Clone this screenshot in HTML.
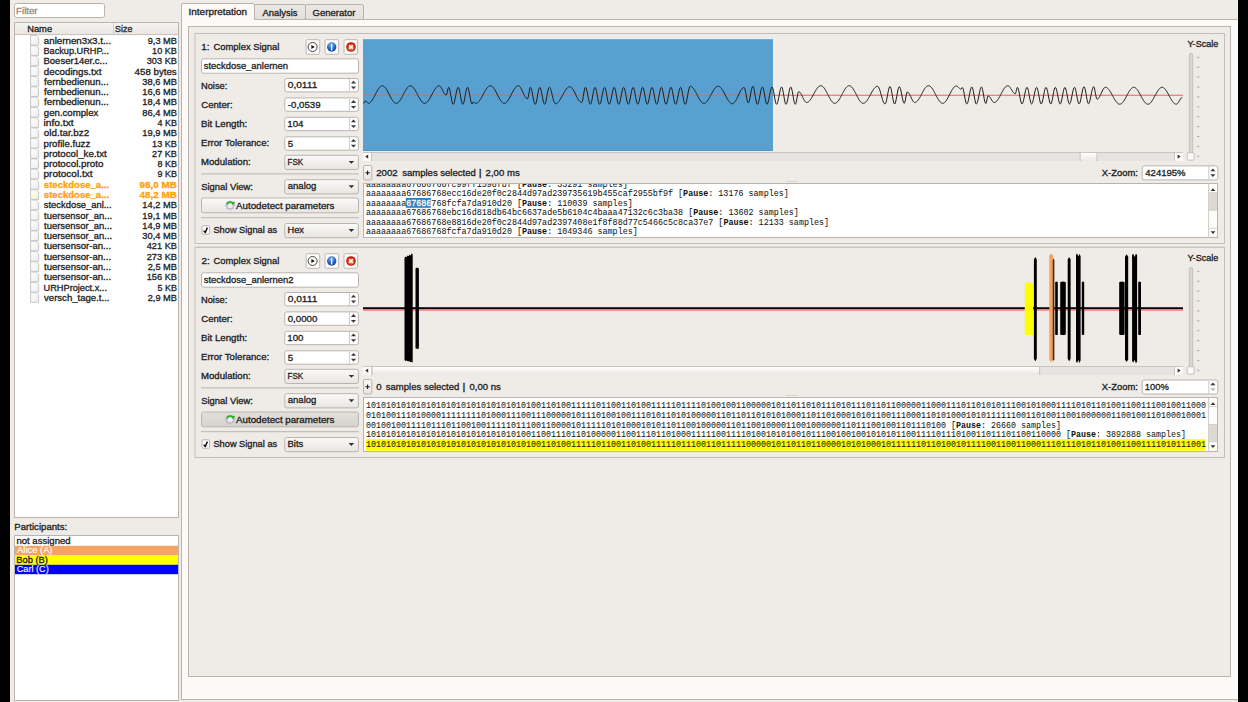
<!DOCTYPE html><html><head><meta charset="utf-8"><style>html,body{margin:0;padding:0;width:1248px;height:702px;overflow:hidden;background:#000}svg{display:block}</style></head><body><svg width="1248" height="702" viewBox="0 0 1248 702"><rect x="0" y="0" width="1248" height="702" fill="#efebe7"/>
<rect x="14.5" y="3.5" width="90" height="14" fill="#fff" stroke="#b9b4ae" stroke-width="1" rx="2"/>
<text x="16.07" y="13.95" font-family='"Liberation Sans", sans-serif' font-size="8.8" fill="#8f8b87" stroke="#8f8b87" stroke-width="0.3" textLength="21.54" lengthAdjust="spacingAndGlyphs">Filter</text>
<rect x="14.5" y="22.5" width="164" height="495" fill="#fff" stroke="#b9b4ae" stroke-width="1"/>
<defs><linearGradient id="hdr" x1="0" y1="0" x2="0" y2="1"><stop offset="0" stop-color="#f6f4f2"/><stop offset="1" stop-color="#e9e6e2"/></linearGradient><linearGradient id="btn" x1="0" y1="0" x2="0" y2="1"><stop offset="0" stop-color="#fbfaf9"/><stop offset="1" stop-color="#e8e5e1"/></linearGradient><linearGradient id="btnd" x1="0" y1="0" x2="0" y2="1"><stop offset="0" stop-color="#e3dfdb"/><stop offset="1" stop-color="#d6d2cd"/></linearGradient><linearGradient id="tab" x1="0" y1="0" x2="0" y2="1"><stop offset="0" stop-color="#ece9e5"/><stop offset="1" stop-color="#e3dfdb"/></linearGradient><linearGradient id="icon" x1="0" y1="0" x2="1" y2="1"><stop offset="0" stop-color="#ffffff"/><stop offset="1" stop-color="#ededed"/></linearGradient><radialGradient id="infog" cx="0.45" cy="0.3" r="0.75"><stop offset="0" stop-color="#8ab8f0"/><stop offset="0.55" stop-color="#2a66c4"/><stop offset="1" stop-color="#0b3a8e"/></radialGradient><radialGradient id="closeg" cx="0.5" cy="0.55" r="0.6"><stop offset="0" stop-color="#ffa858"/><stop offset="0.35" stop-color="#f07030"/><stop offset="0.65" stop-color="#d01c14"/><stop offset="1" stop-color="#b00808"/></radialGradient><linearGradient id="hgrad" x1="0" y1="0" x2="0" y2="1"><stop offset="0" stop-color="#ffffff"/><stop offset="1" stop-color="#ebe8e4"/></linearGradient></defs>
<rect x="15" y="23" width="163" height="11.5" fill="url(#hdr)"/>
<line x1="15" y1="34.6" x2="178" y2="34.6" stroke="#c6c1bb" stroke-width="1.0"/>
<line x1="113.5" y1="23" x2="113.5" y2="34" stroke="#d2cdc7" stroke-width="1"/>
<text x="27.17" y="32.05" font-family='"Liberation Sans", sans-serif' font-size="8.8" fill="#1e1e1e" stroke="#1e1e1e" stroke-width="0.3" textLength="24.93" lengthAdjust="spacingAndGlyphs">Name</text>
<text x="115.04" y="32.05" font-family='"Liberation Sans", sans-serif' font-size="8.8" fill="#1e1e1e" stroke="#1e1e1e" stroke-width="0.3" textLength="17.35" lengthAdjust="spacingAndGlyphs">Size</text>
<path d="M30.6 35.40 h5.80 l2.2 2.4 v7.30 h-8 z" fill="url(#icon)" stroke="#c2c2c2" stroke-width="0.9" stroke-linejoin="miter"/>
<text x="43.79" y="43.65" font-family='"Liberation Sans", sans-serif' font-size="8.8" fill="#1e1e1e" stroke="#1e1e1e" stroke-width="0.3" textLength="67.27" lengthAdjust="spacingAndGlyphs">anlernen3x3.t...</text>
<text x="147.69" y="43.65" font-family='"Liberation Sans", sans-serif' font-size="8.8" fill="#1e1e1e" stroke="#1e1e1e" stroke-width="0.3" textLength="29.21" lengthAdjust="spacingAndGlyphs">9,3 MB</text>
<path d="M30.6 45.69 h5.80 l2.2 2.4 v7.30 h-8 z" fill="url(#icon)" stroke="#c2c2c2" stroke-width="0.9" stroke-linejoin="miter"/>
<text x="43.47" y="53.94" font-family='"Liberation Sans", sans-serif' font-size="8.8" fill="#1e1e1e" stroke="#1e1e1e" stroke-width="0.3" textLength="65.48" lengthAdjust="spacingAndGlyphs">Backup.URHP...</text>
<text x="152.12" y="53.94" font-family='"Liberation Sans", sans-serif' font-size="8.8" fill="#1e1e1e" stroke="#1e1e1e" stroke-width="0.3" textLength="24.78" lengthAdjust="spacingAndGlyphs">10 KB</text>
<path d="M30.6 55.98 h5.80 l2.2 2.4 v7.30 h-8 z" fill="url(#icon)" stroke="#c2c2c2" stroke-width="0.9" stroke-linejoin="miter"/>
<text x="43.47" y="64.23" font-family='"Liberation Sans", sans-serif' font-size="8.8" fill="#1e1e1e" stroke="#1e1e1e" stroke-width="0.3" textLength="64.06" lengthAdjust="spacingAndGlyphs">Boeser14er.c...</text>
<text x="146.75" y="64.23" font-family='"Liberation Sans", sans-serif' font-size="8.8" fill="#1e1e1e" stroke="#1e1e1e" stroke-width="0.3" textLength="30.15" lengthAdjust="spacingAndGlyphs">303 KB</text>
<path d="M30.6 66.27 h5.80 l2.2 2.4 v7.30 h-8 z" fill="url(#icon)" stroke="#c2c2c2" stroke-width="0.9" stroke-linejoin="miter"/>
<text x="43.83" y="74.52" font-family='"Liberation Sans", sans-serif' font-size="8.8" fill="#1e1e1e" stroke="#1e1e1e" stroke-width="0.3" textLength="57.52" lengthAdjust="spacingAndGlyphs">decodings.txt</text>
<text x="134.62" y="74.52" font-family='"Liberation Sans", sans-serif' font-size="8.8" fill="#1e1e1e" stroke="#1e1e1e" stroke-width="0.3" textLength="42.09" lengthAdjust="spacingAndGlyphs">458 bytes</text>
<path d="M30.6 76.56 h5.80 l2.2 2.4 v7.30 h-8 z" fill="url(#icon)" stroke="#c2c2c2" stroke-width="0.9" stroke-linejoin="miter"/>
<text x="44.11" y="84.81" font-family='"Liberation Sans", sans-serif' font-size="8.8" fill="#1e1e1e" stroke="#1e1e1e" stroke-width="0.3" textLength="64.60" lengthAdjust="spacingAndGlyphs">fernbedienun...</text>
<text x="142.31" y="84.81" font-family='"Liberation Sans", sans-serif' font-size="8.8" fill="#1e1e1e" stroke="#1e1e1e" stroke-width="0.3" textLength="34.59" lengthAdjust="spacingAndGlyphs">38,6 MB</text>
<path d="M30.6 86.85 h5.80 l2.2 2.4 v7.30 h-8 z" fill="url(#icon)" stroke="#c2c2c2" stroke-width="0.9" stroke-linejoin="miter"/>
<text x="44.11" y="95.10" font-family='"Liberation Sans", sans-serif' font-size="8.8" fill="#1e1e1e" stroke="#1e1e1e" stroke-width="0.3" textLength="64.60" lengthAdjust="spacingAndGlyphs">fernbedienun...</text>
<text x="142.31" y="95.10" font-family='"Liberation Sans", sans-serif' font-size="8.8" fill="#1e1e1e" stroke="#1e1e1e" stroke-width="0.3" textLength="34.59" lengthAdjust="spacingAndGlyphs">16,6 MB</text>
<path d="M30.6 97.14 h5.80 l2.2 2.4 v7.30 h-8 z" fill="url(#icon)" stroke="#c2c2c2" stroke-width="0.9" stroke-linejoin="miter"/>
<text x="44.11" y="105.39" font-family='"Liberation Sans", sans-serif' font-size="8.8" fill="#1e1e1e" stroke="#1e1e1e" stroke-width="0.3" textLength="64.60" lengthAdjust="spacingAndGlyphs">fernbedienun...</text>
<text x="142.31" y="105.39" font-family='"Liberation Sans", sans-serif' font-size="8.8" fill="#1e1e1e" stroke="#1e1e1e" stroke-width="0.3" textLength="34.59" lengthAdjust="spacingAndGlyphs">18,4 MB</text>
<path d="M30.6 107.43 h5.80 l2.2 2.4 v7.30 h-8 z" fill="url(#icon)" stroke="#c2c2c2" stroke-width="0.9" stroke-linejoin="miter"/>
<text x="43.83" y="115.68" font-family='"Liberation Sans", sans-serif' font-size="8.8" fill="#1e1e1e" stroke="#1e1e1e" stroke-width="0.3" textLength="54.56" lengthAdjust="spacingAndGlyphs">gen.complex</text>
<text x="142.31" y="115.68" font-family='"Liberation Sans", sans-serif' font-size="8.8" fill="#1e1e1e" stroke="#1e1e1e" stroke-width="0.3" textLength="34.59" lengthAdjust="spacingAndGlyphs">86,4 MB</text>
<path d="M30.6 117.72 h5.80 l2.2 2.4 v7.30 h-8 z" fill="url(#icon)" stroke="#c2c2c2" stroke-width="0.9" stroke-linejoin="miter"/>
<text x="43.50" y="125.97" font-family='"Liberation Sans", sans-serif' font-size="8.8" fill="#1e1e1e" stroke="#1e1e1e" stroke-width="0.3" textLength="30.16" lengthAdjust="spacingAndGlyphs">info.txt</text>
<text x="157.50" y="125.97" font-family='"Liberation Sans", sans-serif' font-size="8.8" fill="#1e1e1e" stroke="#1e1e1e" stroke-width="0.3" textLength="19.40" lengthAdjust="spacingAndGlyphs">4 KB</text>
<path d="M30.6 128.01 h5.80 l2.2 2.4 v7.30 h-8 z" fill="url(#icon)" stroke="#c2c2c2" stroke-width="0.9" stroke-linejoin="miter"/>
<text x="43.83" y="136.26" font-family='"Liberation Sans", sans-serif' font-size="8.8" fill="#1e1e1e" stroke="#1e1e1e" stroke-width="0.3" textLength="45.39" lengthAdjust="spacingAndGlyphs">old.tar.bz2</text>
<text x="142.31" y="136.26" font-family='"Liberation Sans", sans-serif' font-size="8.8" fill="#1e1e1e" stroke="#1e1e1e" stroke-width="0.3" textLength="34.59" lengthAdjust="spacingAndGlyphs">19,9 MB</text>
<path d="M30.6 138.30 h5.80 l2.2 2.4 v7.30 h-8 z" fill="url(#icon)" stroke="#c2c2c2" stroke-width="0.9" stroke-linejoin="miter"/>
<text x="43.53" y="146.55" font-family='"Liberation Sans", sans-serif' font-size="8.8" fill="#1e1e1e" stroke="#1e1e1e" stroke-width="0.3" textLength="46.76" lengthAdjust="spacingAndGlyphs">profile.fuzz</text>
<text x="152.12" y="146.55" font-family='"Liberation Sans", sans-serif' font-size="8.8" fill="#1e1e1e" stroke="#1e1e1e" stroke-width="0.3" textLength="24.78" lengthAdjust="spacingAndGlyphs">13 KB</text>
<path d="M30.6 148.59 h5.80 l2.2 2.4 v7.30 h-8 z" fill="url(#icon)" stroke="#c2c2c2" stroke-width="0.9" stroke-linejoin="miter"/>
<text x="43.53" y="156.84" font-family='"Liberation Sans", sans-serif' font-size="8.8" fill="#1e1e1e" stroke="#1e1e1e" stroke-width="0.3" textLength="63.28" lengthAdjust="spacingAndGlyphs">protocol_ke.txt</text>
<text x="152.12" y="156.84" font-family='"Liberation Sans", sans-serif' font-size="8.8" fill="#1e1e1e" stroke="#1e1e1e" stroke-width="0.3" textLength="24.78" lengthAdjust="spacingAndGlyphs">27 KB</text>
<path d="M30.6 158.88 h5.80 l2.2 2.4 v7.30 h-8 z" fill="url(#icon)" stroke="#c2c2c2" stroke-width="0.9" stroke-linejoin="miter"/>
<text x="43.53" y="167.13" font-family='"Liberation Sans", sans-serif' font-size="8.8" fill="#1e1e1e" stroke="#1e1e1e" stroke-width="0.3" textLength="59.83" lengthAdjust="spacingAndGlyphs">protocol.proto</text>
<text x="157.50" y="167.13" font-family='"Liberation Sans", sans-serif' font-size="8.8" fill="#1e1e1e" stroke="#1e1e1e" stroke-width="0.3" textLength="19.40" lengthAdjust="spacingAndGlyphs">8 KB</text>
<path d="M30.6 169.17 h5.80 l2.2 2.4 v7.30 h-8 z" fill="url(#icon)" stroke="#c2c2c2" stroke-width="0.9" stroke-linejoin="miter"/>
<text x="43.53" y="177.42" font-family='"Liberation Sans", sans-serif' font-size="8.8" fill="#1e1e1e" stroke="#1e1e1e" stroke-width="0.3" textLength="48.97" lengthAdjust="spacingAndGlyphs">protocol.txt</text>
<text x="157.50" y="177.42" font-family='"Liberation Sans", sans-serif' font-size="8.8" fill="#1e1e1e" stroke="#1e1e1e" stroke-width="0.3" textLength="19.40" lengthAdjust="spacingAndGlyphs">9 KB</text>
<path d="M30.6 179.46 h5.80 l2.2 2.4 v7.30 h-8 z" fill="url(#icon)" stroke="#c2c2c2" stroke-width="0.9" stroke-linejoin="miter"/>
<text x="43.86" y="187.71" font-family='"Liberation Sans", sans-serif' font-size="8.8" font-weight="bold" fill="#ffa30a" stroke="#ffa30a" stroke-width="0.3" textLength="65.23" lengthAdjust="spacingAndGlyphs">steckdose_a...</text>
<text x="139.61" y="187.71" font-family='"Liberation Sans", sans-serif' font-size="8.8" font-weight="bold" fill="#ffa30a" stroke="#ffa30a" stroke-width="0.3" textLength="37.29" lengthAdjust="spacingAndGlyphs">98,0 MB</text>
<path d="M30.6 189.75 h5.80 l2.2 2.4 v7.30 h-8 z" fill="url(#icon)" stroke="#c2c2c2" stroke-width="0.9" stroke-linejoin="miter"/>
<text x="43.86" y="198.00" font-family='"Liberation Sans", sans-serif' font-size="8.8" font-weight="bold" fill="#ffa30a" stroke="#ffa30a" stroke-width="0.3" textLength="65.23" lengthAdjust="spacingAndGlyphs">steckdose_a...</text>
<text x="139.61" y="198.00" font-family='"Liberation Sans", sans-serif' font-size="8.8" font-weight="bold" fill="#ffa30a" stroke="#ffa30a" stroke-width="0.3" textLength="37.29" lengthAdjust="spacingAndGlyphs">48,2 MB</text>
<path d="M30.6 200.04 h5.80 l2.2 2.4 v7.30 h-8 z" fill="url(#icon)" stroke="#c2c2c2" stroke-width="0.9" stroke-linejoin="miter"/>
<text x="43.84" y="208.29" font-family='"Liberation Sans", sans-serif' font-size="8.8" fill="#1e1e1e" stroke="#1e1e1e" stroke-width="0.3" textLength="67.75" lengthAdjust="spacingAndGlyphs">steckdose_anl...</text>
<text x="142.31" y="208.29" font-family='"Liberation Sans", sans-serif' font-size="8.8" fill="#1e1e1e" stroke="#1e1e1e" stroke-width="0.3" textLength="34.59" lengthAdjust="spacingAndGlyphs">14,2 MB</text>
<path d="M30.6 210.33 h5.80 l2.2 2.4 v7.30 h-8 z" fill="url(#icon)" stroke="#c2c2c2" stroke-width="0.9" stroke-linejoin="miter"/>
<text x="44.07" y="218.58" font-family='"Liberation Sans", sans-serif' font-size="8.8" fill="#1e1e1e" stroke="#1e1e1e" stroke-width="0.3" textLength="68.16" lengthAdjust="spacingAndGlyphs">tuersensor_an...</text>
<text x="142.31" y="218.58" font-family='"Liberation Sans", sans-serif' font-size="8.8" fill="#1e1e1e" stroke="#1e1e1e" stroke-width="0.3" textLength="34.59" lengthAdjust="spacingAndGlyphs">19,1 MB</text>
<path d="M30.6 220.62 h5.80 l2.2 2.4 v7.30 h-8 z" fill="url(#icon)" stroke="#c2c2c2" stroke-width="0.9" stroke-linejoin="miter"/>
<text x="44.07" y="228.87" font-family='"Liberation Sans", sans-serif' font-size="8.8" fill="#1e1e1e" stroke="#1e1e1e" stroke-width="0.3" textLength="68.16" lengthAdjust="spacingAndGlyphs">tuersensor_an...</text>
<text x="142.31" y="228.87" font-family='"Liberation Sans", sans-serif' font-size="8.8" fill="#1e1e1e" stroke="#1e1e1e" stroke-width="0.3" textLength="34.59" lengthAdjust="spacingAndGlyphs">14,9 MB</text>
<path d="M30.6 230.91 h5.80 l2.2 2.4 v7.30 h-8 z" fill="url(#icon)" stroke="#c2c2c2" stroke-width="0.9" stroke-linejoin="miter"/>
<text x="44.07" y="239.16" font-family='"Liberation Sans", sans-serif' font-size="8.8" fill="#1e1e1e" stroke="#1e1e1e" stroke-width="0.3" textLength="68.16" lengthAdjust="spacingAndGlyphs">tuersensor_an...</text>
<text x="142.31" y="239.16" font-family='"Liberation Sans", sans-serif' font-size="8.8" fill="#1e1e1e" stroke="#1e1e1e" stroke-width="0.3" textLength="34.59" lengthAdjust="spacingAndGlyphs">30,4 MB</text>
<path d="M30.6 241.20 h5.80 l2.2 2.4 v7.30 h-8 z" fill="url(#icon)" stroke="#c2c2c2" stroke-width="0.9" stroke-linejoin="miter"/>
<text x="44.07" y="249.45" font-family='"Liberation Sans", sans-serif' font-size="8.8" fill="#1e1e1e" stroke="#1e1e1e" stroke-width="0.3" textLength="66.99" lengthAdjust="spacingAndGlyphs">tuersensor-an...</text>
<text x="146.75" y="249.45" font-family='"Liberation Sans", sans-serif' font-size="8.8" fill="#1e1e1e" stroke="#1e1e1e" stroke-width="0.3" textLength="30.15" lengthAdjust="spacingAndGlyphs">421 KB</text>
<path d="M30.6 251.49 h5.80 l2.2 2.4 v7.30 h-8 z" fill="url(#icon)" stroke="#c2c2c2" stroke-width="0.9" stroke-linejoin="miter"/>
<text x="44.07" y="259.74" font-family='"Liberation Sans", sans-serif' font-size="8.8" fill="#1e1e1e" stroke="#1e1e1e" stroke-width="0.3" textLength="66.99" lengthAdjust="spacingAndGlyphs">tuersensor-an...</text>
<text x="146.75" y="259.74" font-family='"Liberation Sans", sans-serif' font-size="8.8" fill="#1e1e1e" stroke="#1e1e1e" stroke-width="0.3" textLength="30.15" lengthAdjust="spacingAndGlyphs">273 KB</text>
<path d="M30.6 261.78 h5.80 l2.2 2.4 v7.30 h-8 z" fill="url(#icon)" stroke="#c2c2c2" stroke-width="0.9" stroke-linejoin="miter"/>
<text x="44.07" y="270.03" font-family='"Liberation Sans", sans-serif' font-size="8.8" fill="#1e1e1e" stroke="#1e1e1e" stroke-width="0.3" textLength="66.99" lengthAdjust="spacingAndGlyphs">tuersensor-an...</text>
<text x="147.69" y="270.03" font-family='"Liberation Sans", sans-serif' font-size="8.8" fill="#1e1e1e" stroke="#1e1e1e" stroke-width="0.3" textLength="29.21" lengthAdjust="spacingAndGlyphs">2,5 MB</text>
<path d="M30.6 272.07 h5.80 l2.2 2.4 v7.30 h-8 z" fill="url(#icon)" stroke="#c2c2c2" stroke-width="0.9" stroke-linejoin="miter"/>
<text x="44.07" y="280.32" font-family='"Liberation Sans", sans-serif' font-size="8.8" fill="#1e1e1e" stroke="#1e1e1e" stroke-width="0.3" textLength="66.99" lengthAdjust="spacingAndGlyphs">tuersensor-an...</text>
<text x="146.75" y="280.32" font-family='"Liberation Sans", sans-serif' font-size="8.8" fill="#1e1e1e" stroke="#1e1e1e" stroke-width="0.3" textLength="30.15" lengthAdjust="spacingAndGlyphs">156 KB</text>
<path d="M30.6 282.36 h5.80 l2.2 2.4 v7.30 h-8 z" fill="url(#icon)" stroke="#c2c2c2" stroke-width="0.9" stroke-linejoin="miter"/>
<text x="43.57" y="290.61" font-family='"Liberation Sans", sans-serif' font-size="8.8" fill="#1e1e1e" stroke="#1e1e1e" stroke-width="0.3" textLength="63.40" lengthAdjust="spacingAndGlyphs">URHProject.x...</text>
<text x="157.50" y="290.61" font-family='"Liberation Sans", sans-serif' font-size="8.8" fill="#1e1e1e" stroke="#1e1e1e" stroke-width="0.3" textLength="19.40" lengthAdjust="spacingAndGlyphs">5 KB</text>
<path d="M30.6 292.65 h5.80 l2.2 2.4 v7.30 h-8 z" fill="url(#icon)" stroke="#c2c2c2" stroke-width="0.9" stroke-linejoin="miter"/>
<text x="44.05" y="300.90" font-family='"Liberation Sans", sans-serif' font-size="8.8" fill="#1e1e1e" stroke="#1e1e1e" stroke-width="0.3" textLength="65.41" lengthAdjust="spacingAndGlyphs">versch_tage.t...</text>
<text x="147.69" y="300.90" font-family='"Liberation Sans", sans-serif' font-size="8.8" fill="#1e1e1e" stroke="#1e1e1e" stroke-width="0.3" textLength="29.21" lengthAdjust="spacingAndGlyphs">2,9 MB</text>
<text x="14.37" y="529.95" font-family='"Liberation Sans", sans-serif' font-size="8.8" fill="#1e1e1e" stroke="#1e1e1e" stroke-width="0.3" textLength="52.86" lengthAdjust="spacingAndGlyphs">Participants:</text>
<rect x="14.5" y="535.5" width="164" height="165" fill="#fff" stroke="#b9b4ae" stroke-width="1"/>
<text x="16.43" y="543.65" font-family='"Liberation Sans", sans-serif' font-size="8.8" fill="#1e1e1e" stroke="#1e1e1e" stroke-width="0.3" textLength="54.14" lengthAdjust="spacingAndGlyphs">not assigned</text>
<rect x="15" y="545.8" width="163" height="9.2" fill="#f4a460"/>
<rect x="15" y="555" width="163" height="9.8" fill="#ffff00"/>
<rect x="15" y="564.8" width="163" height="9.4" fill="#0000ff"/>
<text x="17.13" y="553.25" font-family='"Liberation Sans", sans-serif' font-size="8.8" fill="#ffffff" stroke="#ffffff" stroke-width="0.12" textLength="35.38" lengthAdjust="spacingAndGlyphs">Alice (A)</text>
<text x="16.37" y="562.85" font-family='"Liberation Sans", sans-serif' font-size="8.8" fill="#1a1a1a" stroke="#1a1a1a" stroke-width="0.3" textLength="31.41" lengthAdjust="spacingAndGlyphs">Bob (B)</text>
<text x="16.73" y="572.35" font-family='"Liberation Sans", sans-serif' font-size="8.8" fill="#ffffff" stroke="#ffffff" stroke-width="0.12" textLength="32.08" lengthAdjust="spacingAndGlyphs">Carl (C)</text>
<rect x="181.5" y="19.5" width="1060" height="680" fill="#fcf9f6" stroke="#b9b4ae" stroke-width="1"/>
<rect x="254.5" y="4.5" width="51" height="15" fill="url(#tab)" stroke="#b9b4ae" stroke-width="1" rx="1.5"/>
<rect x="305.5" y="4.5" width="58" height="15" fill="url(#tab)" stroke="#b9b4ae" stroke-width="1" rx="1.5"/>
<path d="M181.5 20 V5 Q181.5 3.5 183 3.5 H253 Q254.5 3.5 254.5 5 V20" fill="#fcf9f6" stroke="#b9b4ae" stroke-width="1"/>
<rect x="182" y="19" width="72" height="2" fill="#fcf9f6"/>
<text x="188.57" y="15.35" font-family='"Liberation Sans", sans-serif' font-size="8.8" fill="#1e1e1e" stroke="#1e1e1e" stroke-width="0.3" textLength="58.55" lengthAdjust="spacingAndGlyphs">Interpretation</text>
<text x="262.63" y="15.95" font-family='"Liberation Sans", sans-serif' font-size="8.8" fill="#1e1e1e" stroke="#1e1e1e" stroke-width="0.3" textLength="34.81" lengthAdjust="spacingAndGlyphs">Analysis</text>
<text x="312.53" y="15.95" font-family='"Liberation Sans", sans-serif' font-size="8.8" fill="#1e1e1e" stroke="#1e1e1e" stroke-width="0.3" textLength="42.91" lengthAdjust="spacingAndGlyphs">Generator</text>
<rect x="188.5" y="26.5" width="1042" height="650" fill="#efebe7" stroke="#b9b4ae" stroke-width="1"/>
<rect x="195" y="33.5" width="1029.5" height="210" fill="#efebe7" stroke="#c3beb8" stroke-width="1"/>
<text x="201.27" y="50.15" font-family='"Liberation Sans", sans-serif' font-size="8.8" fill="#1e1e1e" stroke="#1e1e1e" stroke-width="0.3" textLength="8.22" lengthAdjust="spacingAndGlyphs">1:</text>
<text x="213.53" y="50.15" font-family='"Liberation Sans", sans-serif' font-size="8.8" fill="#1e1e1e" stroke="#1e1e1e" stroke-width="0.3" textLength="65.85" lengthAdjust="spacingAndGlyphs">Complex Signal</text>
<rect x="306.1" y="39.7" width="13.6" height="14.6" fill="#fdfcfb" stroke="#bdb8b2" stroke-width="1" rx="1.5"/>
<rect x="325.0" y="39.7" width="13.6" height="14.6" fill="#fdfcfb" stroke="#bdb8b2" stroke-width="1" rx="1.5"/>
<rect x="344.0" y="39.7" width="13.6" height="14.6" fill="#fdfcfb" stroke="#bdb8b2" stroke-width="1" rx="1.5"/>
<circle cx="312.6" cy="47" r="4.5" fill="#fff" stroke="#3a3a3a" stroke-width="0.95"/>
<path d="M311.40000000000003 45.0 L314.8 47 L311.40000000000003 49.0 Z" fill="#151515"/>
<circle cx="331.7" cy="47" r="4.7" fill="url(#infog)"/>
<path d="M331.15 43.8 L332.25 43.8 L332.4 50.6 L331.0 50.6 Z" fill="#f4f8ff"/>
<circle cx="351.0" cy="47" r="4.8" fill="url(#closeg)"/>
<path d="M349.1 45.1 L352.9 48.9 M352.9 45.1 L349.1 48.9" stroke="#fff8f0" stroke-width="1.5"/>
<rect x="201.5" y="58.8" width="157" height="14.4" fill="#fff" stroke="#b9b4ae" stroke-width="1" rx="2"/>
<text x="203.74" y="68.95" font-family='"Liberation Sans", sans-serif' font-size="8.8" fill="#1e1e1e" stroke="#1e1e1e" stroke-width="0.3" textLength="84.28" lengthAdjust="spacingAndGlyphs">steckdose_anlernen</text>
<text x="200.97" y="88.55" font-family='"Liberation Sans", sans-serif' font-size="8.8" fill="#1e1e1e" stroke="#1e1e1e" stroke-width="0.3" textLength="26.29" lengthAdjust="spacingAndGlyphs">Noise:</text>
<text x="201.33" y="107.95" font-family='"Liberation Sans", sans-serif' font-size="8.8" fill="#1e1e1e" stroke="#1e1e1e" stroke-width="0.3" textLength="31.29" lengthAdjust="spacingAndGlyphs">Center:</text>
<text x="200.97" y="127.25" font-family='"Liberation Sans", sans-serif' font-size="8.8" fill="#1e1e1e" stroke="#1e1e1e" stroke-width="0.3" textLength="46.29" lengthAdjust="spacingAndGlyphs">Bit Length:</text>
<text x="200.97" y="146.25" font-family='"Liberation Sans", sans-serif' font-size="8.8" fill="#1e1e1e" stroke="#1e1e1e" stroke-width="0.3" textLength="68.19" lengthAdjust="spacingAndGlyphs">Error Tolerance:</text>
<text x="200.97" y="164.95" font-family='"Liberation Sans", sans-serif' font-size="8.8" fill="#1e1e1e" stroke="#1e1e1e" stroke-width="0.3" textLength="49.74" lengthAdjust="spacingAndGlyphs">Modulation:</text>
<rect x="284.8" y="78.5" width="73.6" height="13.4" fill="#fff" stroke="#b9b4ae" stroke-width="1" rx="2"/>
<line x1="349.4" y1="79.0" x2="349.4" y2="91.4" stroke="#cfcac4" stroke-width="1"/>
<path d="M350.90 83.50 L353.50 80.70 L356.10 83.50 Z" fill="#3a3a3a"/>
<path d="M350.90 86.50 L353.50 89.30 L356.10 86.50 Z" fill="#3a3a3a"/>
<text x="287.74" y="88.40" font-family='"Liberation Sans", sans-serif' font-size="8.8" fill="#1e1e1e" stroke="#1e1e1e" stroke-width="0.3" textLength="29.57" lengthAdjust="spacingAndGlyphs">0,0111</text>
<rect x="284.8" y="97.9" width="73.6" height="13.4" fill="#fff" stroke="#b9b4ae" stroke-width="1" rx="2"/>
<line x1="349.4" y1="98.4" x2="349.4" y2="110.80000000000001" stroke="#cfcac4" stroke-width="1"/>
<path d="M350.90 102.90 L353.50 100.10 L356.10 102.90 Z" fill="#3a3a3a"/>
<path d="M350.90 105.90 L353.50 108.70 L356.10 105.90 Z" fill="#3a3a3a"/>
<text x="287.89" y="107.80" font-family='"Liberation Sans", sans-serif' font-size="8.8" fill="#1e1e1e" stroke="#1e1e1e" stroke-width="0.3" textLength="32.62" lengthAdjust="spacingAndGlyphs">-0,0539</text>
<rect x="284.8" y="117.3" width="73.6" height="13.4" fill="#fff" stroke="#b9b4ae" stroke-width="1" rx="2"/>
<line x1="349.4" y1="117.8" x2="349.4" y2="130.2" stroke="#cfcac4" stroke-width="1"/>
<path d="M350.90 122.30 L353.50 119.50 L356.10 122.30 Z" fill="#3a3a3a"/>
<path d="M350.90 125.30 L353.50 128.10 L356.10 125.30 Z" fill="#3a3a3a"/>
<text x="287.37" y="127.20" font-family='"Liberation Sans", sans-serif' font-size="8.8" fill="#1e1e1e" stroke="#1e1e1e" stroke-width="0.3" textLength="16.13" lengthAdjust="spacingAndGlyphs">104</text>
<rect x="284.8" y="136.8" width="73.6" height="13.4" fill="#fff" stroke="#b9b4ae" stroke-width="1" rx="2"/>
<line x1="349.4" y1="137.3" x2="349.4" y2="149.70000000000002" stroke="#cfcac4" stroke-width="1"/>
<path d="M350.90 141.80 L353.50 139.00 L356.10 141.80 Z" fill="#3a3a3a"/>
<path d="M350.90 144.80 L353.50 147.60 L356.10 144.80 Z" fill="#3a3a3a"/>
<text x="287.65" y="146.70" font-family='"Liberation Sans", sans-serif' font-size="8.8" fill="#1e1e1e" stroke="#1e1e1e" stroke-width="0.3" textLength="5.38" lengthAdjust="spacingAndGlyphs">5</text>
<rect x="284.8" y="155.3" width="73.6" height="14.2" fill="url(#btn)" stroke="#b9b4ae" stroke-width="1" rx="2"/>
<path d="M348.60 160.90 L354.20 160.90 L351.40 163.80 Z" fill="#333"/>
<text x="287.47" y="164.90" font-family='"Liberation Sans", sans-serif' font-size="8.8" fill="#1e1e1e" stroke="#1e1e1e" stroke-width="0.3" textLength="15.77" lengthAdjust="spacingAndGlyphs">FSK</text>
<line x1="201" y1="173.8" x2="358.8" y2="173.8" stroke="#c4bfb9" stroke-width="1.2"/>
<text x="201.24" y="189.65" font-family='"Liberation Sans", sans-serif' font-size="8.8" fill="#1e1e1e" stroke="#1e1e1e" stroke-width="0.3" textLength="51.73" lengthAdjust="spacingAndGlyphs">Signal View:</text>
<rect x="284.8" y="179.7" width="73.6" height="14.2" fill="url(#btn)" stroke="#b9b4ae" stroke-width="1" rx="2"/>
<path d="M348.60 185.30 L354.20 185.30 L351.40 188.20 Z" fill="#333"/>
<text x="287.79" y="189.30" font-family='"Liberation Sans", sans-serif' font-size="8.8" fill="#1e1e1e" stroke="#1e1e1e" stroke-width="0.3" textLength="28.59" lengthAdjust="spacingAndGlyphs">analog</text>
<rect x="201.5" y="198.0" width="157" height="14.8" fill="url(#btn)" stroke="#b9b4ae" stroke-width="1" rx="2"/>
<path d="M235.00 205.40 L233.70 206.89 L233.56 208.86 L231.59 209.00 L230.10 210.30 L228.61 209.00 L226.64 208.86 L226.50 206.89 L225.20 205.40 L226.50 203.91 L226.64 201.94 L228.61 201.80 L230.10 200.50 L231.59 201.80 L233.56 201.94 L233.70 203.91 Z" fill="#c3bfd3" stroke="#aaa6bf" stroke-width="0.4"/>
<circle cx="230.1" cy="205.4" r="2.6" fill="#eeedf3"/>
<path d="M226.91 204.55 A3.3 3.3 0 0 1 233.29 204.55" fill="none" stroke="#22b422" stroke-width="1.7"/>
<path d="M231.70 201.80 L235.10 202.20 L233.70 205.20 Z" fill="#22b422"/>
<text x="236.13" y="208.85" font-family='"Liberation Sans", sans-serif' font-size="8.8" fill="#1e1e1e" stroke="#1e1e1e" stroke-width="0.3" textLength="98.35" lengthAdjust="spacingAndGlyphs">Autodetect parameters</text>
<line x1="201" y1="217.6" x2="358.8" y2="217.6" stroke="#c4bfb9" stroke-width="1.2"/>
<rect x="202" y="225.8" width="7.6" height="8.4" fill="#fff" stroke="#b5b0aa" stroke-width="1" rx="1"/>
<path d="M203.7 230.6 L205.2 232.6 L207.4 227.6" fill="none" stroke="#0a0a0a" stroke-width="1.4" stroke-linejoin="round"/>
<text x="213.44" y="233.35" font-family='"Liberation Sans", sans-serif' font-size="8.8" fill="#1e1e1e" stroke="#1e1e1e" stroke-width="0.3" textLength="63.71" lengthAdjust="spacingAndGlyphs">Show Signal as</text>
<rect x="284.8" y="223.5" width="73.6" height="14.2" fill="url(#btn)" stroke="#b9b4ae" stroke-width="1" rx="2"/>
<path d="M348.60 229.10 L354.20 229.10 L351.40 232.00 Z" fill="#333"/>
<text x="287.47" y="233.10" font-family='"Liberation Sans", sans-serif' font-size="8.8" fill="#1e1e1e" stroke="#1e1e1e" stroke-width="0.3" textLength="16.55" lengthAdjust="spacingAndGlyphs">Hex</text>
<rect x="195" y="247.5" width="1029.5" height="210" fill="#efebe7" stroke="#c3beb8" stroke-width="1"/>
<text x="201.58" y="264.15" font-family='"Liberation Sans", sans-serif' font-size="8.8" fill="#1e1e1e" stroke="#1e1e1e" stroke-width="0.3" textLength="8.22" lengthAdjust="spacingAndGlyphs">2:</text>
<text x="213.53" y="264.15" font-family='"Liberation Sans", sans-serif' font-size="8.8" fill="#1e1e1e" stroke="#1e1e1e" stroke-width="0.3" textLength="65.85" lengthAdjust="spacingAndGlyphs">Complex Signal</text>
<rect x="306.1" y="253.7" width="13.6" height="14.6" fill="#fdfcfb" stroke="#bdb8b2" stroke-width="1" rx="1.5"/>
<rect x="325.0" y="253.7" width="13.6" height="14.6" fill="#fdfcfb" stroke="#bdb8b2" stroke-width="1" rx="1.5"/>
<rect x="344.0" y="253.7" width="13.6" height="14.6" fill="#fdfcfb" stroke="#bdb8b2" stroke-width="1" rx="1.5"/>
<circle cx="312.6" cy="261" r="4.5" fill="#fff" stroke="#3a3a3a" stroke-width="0.95"/>
<path d="M311.40000000000003 259.0 L314.8 261 L311.40000000000003 263.0 Z" fill="#151515"/>
<circle cx="331.7" cy="261" r="4.7" fill="url(#infog)"/>
<path d="M331.15 257.8 L332.25 257.8 L332.4 264.6 L331.0 264.6 Z" fill="#f4f8ff"/>
<circle cx="351.0" cy="261" r="4.8" fill="url(#closeg)"/>
<path d="M349.1 259.1 L352.9 262.9 M352.9 259.1 L349.1 262.9" stroke="#fff8f0" stroke-width="1.5"/>
<rect x="201.5" y="272.8" width="157" height="14.4" fill="#fff" stroke="#b9b4ae" stroke-width="1" rx="2"/>
<text x="203.74" y="282.95" font-family='"Liberation Sans", sans-serif' font-size="8.8" fill="#1e1e1e" stroke="#1e1e1e" stroke-width="0.3" textLength="89.65" lengthAdjust="spacingAndGlyphs">steckdose_anlernen2</text>
<text x="200.97" y="302.55" font-family='"Liberation Sans", sans-serif' font-size="8.8" fill="#1e1e1e" stroke="#1e1e1e" stroke-width="0.3" textLength="26.29" lengthAdjust="spacingAndGlyphs">Noise:</text>
<text x="201.33" y="321.95" font-family='"Liberation Sans", sans-serif' font-size="8.8" fill="#1e1e1e" stroke="#1e1e1e" stroke-width="0.3" textLength="31.29" lengthAdjust="spacingAndGlyphs">Center:</text>
<text x="200.97" y="341.25" font-family='"Liberation Sans", sans-serif' font-size="8.8" fill="#1e1e1e" stroke="#1e1e1e" stroke-width="0.3" textLength="46.29" lengthAdjust="spacingAndGlyphs">Bit Length:</text>
<text x="200.97" y="360.25" font-family='"Liberation Sans", sans-serif' font-size="8.8" fill="#1e1e1e" stroke="#1e1e1e" stroke-width="0.3" textLength="68.19" lengthAdjust="spacingAndGlyphs">Error Tolerance:</text>
<text x="200.97" y="378.95" font-family='"Liberation Sans", sans-serif' font-size="8.8" fill="#1e1e1e" stroke="#1e1e1e" stroke-width="0.3" textLength="49.74" lengthAdjust="spacingAndGlyphs">Modulation:</text>
<rect x="284.8" y="292.5" width="73.6" height="13.4" fill="#fff" stroke="#b9b4ae" stroke-width="1" rx="2"/>
<line x1="349.4" y1="293.0" x2="349.4" y2="305.4" stroke="#cfcac4" stroke-width="1"/>
<path d="M350.90 297.50 L353.50 294.70 L356.10 297.50 Z" fill="#3a3a3a"/>
<path d="M350.90 300.50 L353.50 303.30 L356.10 300.50 Z" fill="#3a3a3a"/>
<text x="287.74" y="302.40" font-family='"Liberation Sans", sans-serif' font-size="8.8" fill="#1e1e1e" stroke="#1e1e1e" stroke-width="0.3" textLength="29.57" lengthAdjust="spacingAndGlyphs">0,0111</text>
<rect x="284.8" y="311.9" width="73.6" height="13.4" fill="#fff" stroke="#b9b4ae" stroke-width="1" rx="2"/>
<line x1="349.4" y1="312.4" x2="349.4" y2="324.79999999999995" stroke="#cfcac4" stroke-width="1"/>
<path d="M350.90 316.90 L353.50 314.10 L356.10 316.90 Z" fill="#3a3a3a"/>
<path d="M350.90 319.90 L353.50 322.70 L356.10 319.90 Z" fill="#3a3a3a"/>
<text x="287.74" y="321.80" font-family='"Liberation Sans", sans-serif' font-size="8.8" fill="#1e1e1e" stroke="#1e1e1e" stroke-width="0.3" textLength="29.57" lengthAdjust="spacingAndGlyphs">0,0000</text>
<rect x="284.8" y="331.3" width="73.6" height="13.4" fill="#fff" stroke="#b9b4ae" stroke-width="1" rx="2"/>
<line x1="349.4" y1="331.8" x2="349.4" y2="344.2" stroke="#cfcac4" stroke-width="1"/>
<path d="M350.90 336.30 L353.50 333.50 L356.10 336.30 Z" fill="#3a3a3a"/>
<path d="M350.90 339.30 L353.50 342.10 L356.10 339.30 Z" fill="#3a3a3a"/>
<text x="287.37" y="341.20" font-family='"Liberation Sans", sans-serif' font-size="8.8" fill="#1e1e1e" stroke="#1e1e1e" stroke-width="0.3" textLength="16.13" lengthAdjust="spacingAndGlyphs">100</text>
<rect x="284.8" y="350.8" width="73.6" height="13.4" fill="#fff" stroke="#b9b4ae" stroke-width="1" rx="2"/>
<line x1="349.4" y1="351.3" x2="349.4" y2="363.7" stroke="#cfcac4" stroke-width="1"/>
<path d="M350.90 355.80 L353.50 353.00 L356.10 355.80 Z" fill="#3a3a3a"/>
<path d="M350.90 358.80 L353.50 361.60 L356.10 358.80 Z" fill="#3a3a3a"/>
<text x="287.65" y="360.70" font-family='"Liberation Sans", sans-serif' font-size="8.8" fill="#1e1e1e" stroke="#1e1e1e" stroke-width="0.3" textLength="5.38" lengthAdjust="spacingAndGlyphs">5</text>
<rect x="284.8" y="369.3" width="73.6" height="14.2" fill="url(#btn)" stroke="#b9b4ae" stroke-width="1" rx="2"/>
<path d="M348.60 374.90 L354.20 374.90 L351.40 377.80 Z" fill="#333"/>
<text x="287.47" y="378.90" font-family='"Liberation Sans", sans-serif' font-size="8.8" fill="#1e1e1e" stroke="#1e1e1e" stroke-width="0.3" textLength="15.77" lengthAdjust="spacingAndGlyphs">FSK</text>
<line x1="201" y1="387.8" x2="358.8" y2="387.8" stroke="#c4bfb9" stroke-width="1.2"/>
<text x="201.24" y="403.65" font-family='"Liberation Sans", sans-serif' font-size="8.8" fill="#1e1e1e" stroke="#1e1e1e" stroke-width="0.3" textLength="51.73" lengthAdjust="spacingAndGlyphs">Signal View:</text>
<rect x="284.8" y="393.7" width="73.6" height="14.2" fill="url(#btn)" stroke="#b9b4ae" stroke-width="1" rx="2"/>
<path d="M348.60 399.30 L354.20 399.30 L351.40 402.20 Z" fill="#333"/>
<text x="287.79" y="403.30" font-family='"Liberation Sans", sans-serif' font-size="8.8" fill="#1e1e1e" stroke="#1e1e1e" stroke-width="0.3" textLength="28.59" lengthAdjust="spacingAndGlyphs">analog</text>
<rect x="201.5" y="412.0" width="157" height="14.8" fill="url(#btnd)" stroke="#b9b4ae" stroke-width="1" rx="2"/>
<path d="M235.00 419.40 L233.70 420.89 L233.56 422.86 L231.59 423.00 L230.10 424.30 L228.61 423.00 L226.64 422.86 L226.50 420.89 L225.20 419.40 L226.50 417.91 L226.64 415.94 L228.61 415.80 L230.10 414.50 L231.59 415.80 L233.56 415.94 L233.70 417.91 Z" fill="#c3bfd3" stroke="#aaa6bf" stroke-width="0.4"/>
<circle cx="230.1" cy="419.4" r="2.6" fill="#eeedf3"/>
<path d="M226.91 418.55 A3.3 3.3 0 0 1 233.29 418.55" fill="none" stroke="#22b422" stroke-width="1.7"/>
<path d="M231.70 415.80 L235.10 416.20 L233.70 419.20 Z" fill="#22b422"/>
<text x="236.13" y="422.85" font-family='"Liberation Sans", sans-serif' font-size="8.8" fill="#1e1e1e" stroke="#1e1e1e" stroke-width="0.3" textLength="98.35" lengthAdjust="spacingAndGlyphs">Autodetect parameters</text>
<line x1="201" y1="431.6" x2="358.8" y2="431.6" stroke="#c4bfb9" stroke-width="1.2"/>
<rect x="202" y="439.8" width="7.6" height="8.4" fill="#fff" stroke="#b5b0aa" stroke-width="1" rx="1"/>
<path d="M203.7 444.6 L205.2 446.6 L207.4 441.6" fill="none" stroke="#0a0a0a" stroke-width="1.4" stroke-linejoin="round"/>
<text x="213.44" y="447.35" font-family='"Liberation Sans", sans-serif' font-size="8.8" fill="#1e1e1e" stroke="#1e1e1e" stroke-width="0.3" textLength="63.71" lengthAdjust="spacingAndGlyphs">Show Signal as</text>
<rect x="284.8" y="437.5" width="73.6" height="14.2" fill="url(#btn)" stroke="#b9b4ae" stroke-width="1" rx="2"/>
<path d="M348.60 443.10 L354.20 443.10 L351.40 446.00 Z" fill="#333"/>
<text x="287.47" y="447.10" font-family='"Liberation Sans", sans-serif' font-size="8.8" fill="#1e1e1e" stroke="#1e1e1e" stroke-width="0.3" textLength="15.86" lengthAdjust="spacingAndGlyphs">Bits</text>
<rect x="363" y="39.2" width="410" height="111.6" fill="#58a0d0"/>
<line x1="363" y1="150.4" x2="773" y2="150.4" stroke="#3f8fc6" stroke-width="0.8"/>
<line x1="363" y1="95.25" x2="1183" y2="95.25" stroke="#f06060" stroke-width="1.2"/>
<path d="M363.30 103.30L363.85 102.96L364.40 102.15L364.95 101.34L365.50 101.00L366.06 101.22L366.62 101.79L367.18 102.51L367.74 103.08L368.30 103.30L368.80 103.24L369.30 103.08L369.80 102.81L370.30 102.43L370.80 101.96L371.30 101.39L371.80 100.74L372.30 100.01L372.80 99.21L373.30 98.35L373.80 97.44L374.30 96.50L374.80 95.53L375.30 94.55L375.80 93.57L376.30 92.60L376.80 91.66L377.30 90.75L377.80 89.89L378.30 89.09L378.80 88.36L379.30 87.71L379.80 87.14L380.30 86.67L380.80 86.29L381.30 86.02L381.80 85.86L382.30 85.80L382.82 85.86L383.33 86.04L383.85 86.33L384.37 86.73L384.88 87.24L385.40 87.85L385.92 88.55L386.43 89.32L386.95 90.17L387.47 91.08L387.98 92.04L388.50 93.03L389.02 94.04L389.53 95.06L390.05 96.07L390.57 97.06L391.08 98.02L391.60 98.92L392.12 99.78L392.63 100.55L393.15 101.25L393.67 101.86L394.18 102.37L394.70 102.77L395.22 103.06L395.73 103.24L396.25 103.30L396.76 103.24L397.26 103.08L397.77 102.81L398.27 102.43L398.78 101.96L399.28 101.39L399.79 100.74L400.29 100.01L400.80 99.21L401.30 98.35L401.81 97.44L402.31 96.50L402.82 95.53L403.32 94.55L403.83 93.57L404.34 92.60L404.84 91.66L405.35 90.75L405.85 89.89L406.36 89.09L406.86 88.36L407.37 87.71L407.87 87.14L408.38 86.67L408.88 86.29L409.39 86.02L409.89 85.86L410.40 85.80L410.91 85.86L411.41 86.02L411.92 86.29L412.43 86.67L412.94 87.14L413.44 87.71L413.95 88.36L414.46 89.09L414.96 89.89L415.47 90.75L415.98 91.66L416.49 92.60L416.99 93.57L417.50 94.55L418.01 95.53L418.51 96.50L419.02 97.44L419.53 98.35L420.04 99.21L420.54 100.01L421.05 100.74L421.56 101.39L422.06 101.96L422.57 102.43L423.08 102.81L423.59 103.08L424.09 103.24L424.60 103.30L425.10 103.25L425.61 103.10L426.11 102.84L426.61 102.49L427.12 102.05L427.62 101.52L428.12 100.90L428.63 100.21L429.13 99.46L429.63 98.65L430.14 97.79L430.64 96.89L431.14 95.97L431.65 95.02L432.15 94.08L432.66 93.13L433.16 92.21L433.66 91.31L434.17 90.45L434.67 89.64L435.17 88.89L435.68 88.20L436.18 87.58L436.68 87.05L437.19 86.61L437.69 86.26L438.19 86.00L438.70 85.85L439.20 85.80L439.70 85.92L440.21 86.26L440.71 86.80L441.21 87.53L441.72 88.40L442.22 89.38L442.73 90.40L443.23 91.42L443.73 92.40L444.24 93.27L444.74 94.00L445.24 94.54L445.75 94.88L446.25 95.00L446.84 93.87L447.43 91.15L448.01 88.43L448.60 87.30L449.11 87.81L449.62 89.29L450.13 91.55L450.64 94.32L451.16 97.28L451.67 100.05L452.18 102.31L452.69 103.79L453.20 104.30L453.70 103.88L454.20 102.68L454.70 100.80L455.20 98.43L455.70 95.80L456.20 93.17L456.70 90.80L457.20 88.92L457.70 87.72L458.20 87.30L458.71 87.81L459.22 89.29L459.73 91.55L460.24 94.32L460.76 97.28L461.27 100.05L461.78 102.31L462.29 103.79L462.80 104.30L463.32 103.79L463.84 102.31L464.37 100.05L464.89 97.28L465.41 94.32L465.93 91.55L466.46 89.29L466.98 87.81L467.50 87.30L468.01 87.80L468.52 89.25L469.03 91.47L469.54 94.20L470.06 97.10L470.57 99.83L471.08 102.05L471.59 103.50L472.10 104.00L472.70 103.00L473.30 102.00L473.80 102.12L474.30 102.45L474.80 102.85L475.30 103.18L475.80 103.30L476.30 103.25L476.81 103.10L477.31 102.84L477.81 102.49L478.32 102.05L478.82 101.52L479.32 100.90L479.83 100.21L480.33 99.46L480.83 98.65L481.34 97.79L481.84 96.89L482.34 95.97L482.85 95.02L483.35 94.08L483.86 93.13L484.36 92.21L484.86 91.31L485.37 90.45L485.87 89.64L486.37 88.89L486.88 88.20L487.38 87.58L487.88 87.05L488.39 86.61L488.89 86.26L489.39 86.00L489.90 85.85L490.40 85.80L490.91 85.86L491.43 86.04L491.94 86.33L492.46 86.73L492.97 87.24L493.49 87.85L494.00 88.55L494.52 89.32L495.03 90.17L495.55 91.08L496.06 92.04L496.58 93.03L497.09 94.04L497.61 95.06L498.12 96.07L498.64 97.06L499.15 98.02L499.67 98.92L500.18 99.78L500.70 100.55L501.21 101.25L501.73 101.86L502.24 102.37L502.76 102.77L503.27 103.06L503.79 103.24L504.30 103.30L504.82 103.24L505.34 103.06L505.86 102.77L506.37 102.37L506.89 101.86L507.41 101.25L507.93 100.55L508.45 99.78L508.97 98.92L509.49 98.02L510.00 97.06L510.52 96.07L511.04 95.06L511.56 94.04L512.08 93.03L512.60 92.04L513.11 91.08L513.63 90.17L514.15 89.32L514.67 88.55L515.19 87.85L515.71 87.24L516.23 86.73L516.74 86.33L517.26 86.04L517.78 85.86L518.30 85.80L518.81 85.90L519.32 86.19L519.83 86.67L520.34 87.31L520.86 88.11L521.37 89.04L521.88 90.06L522.39 91.15L522.90 92.27L523.41 93.40L523.92 94.49L524.43 95.51L524.94 96.44L525.46 97.24L525.97 97.88L526.48 98.36L526.99 98.65L527.50 98.75L528.08 97.66L528.66 94.79L529.24 91.26L529.82 88.39L530.40 87.30L530.94 87.81L531.48 89.29L532.02 91.55L532.56 94.32L533.09 97.28L533.63 100.05L534.17 102.31L534.71 103.79L535.25 104.30L535.76 103.79L536.26 102.31L536.77 100.05L537.27 97.28L537.78 94.32L538.28 91.55L538.79 89.29L539.29 87.81L539.80 87.30L540.33 87.81L540.87 89.29L541.40 91.55L541.93 94.32L542.47 97.28L543.00 100.05L543.53 102.31L544.07 103.79L544.60 104.30L545.12 103.79L545.64 102.31L546.17 100.05L546.69 97.28L547.21 94.32L547.73 91.55L548.26 89.29L548.78 87.81L549.30 87.30L549.81 87.58L550.32 88.40L550.82 89.71L551.33 91.41L551.84 93.40L552.35 95.52L552.86 97.65L553.37 99.64L553.88 101.34L554.38 102.65L554.89 103.47L555.40 103.75L555.91 103.70L556.42 103.54L556.94 103.27L557.45 102.91L557.96 102.44L558.48 101.89L558.99 101.25L559.50 100.54L560.01 99.76L560.52 98.92L561.04 98.04L561.55 97.12L562.06 96.18L562.58 95.23L563.09 94.27L563.60 93.33L564.11 92.41L564.62 91.53L565.14 90.69L565.65 89.91L566.16 89.20L566.67 88.56L567.19 88.01L567.70 87.54L568.21 87.18L568.73 86.91L569.24 86.75L569.75 86.70L570.27 86.77L570.79 86.99L571.31 87.35L571.83 87.85L572.35 88.47L572.87 89.21L573.39 90.04L573.91 90.97L574.43 91.95L574.95 92.99L575.47 94.06L575.98 95.14L576.50 96.21L577.02 97.25L577.54 98.23L578.06 99.16L578.58 99.99L579.10 100.73L579.62 101.35L580.14 101.85L580.66 102.21L581.18 102.43L581.70 102.50L582.23 101.75L582.76 99.64L583.29 96.59L583.81 93.21L584.34 90.16L584.87 88.05L585.40 87.30L585.90 87.72L586.40 88.92L586.90 90.80L587.40 93.17L587.90 95.80L588.40 98.43L588.90 100.80L589.40 102.68L589.90 103.88L590.40 104.30L590.91 103.79L591.42 102.31L591.93 100.05L592.44 97.28L592.96 94.32L593.47 91.55L593.98 89.29L594.49 87.81L595.00 87.30L595.51 87.81L596.02 89.29L596.53 91.55L597.04 94.32L597.56 97.28L598.07 100.05L598.58 102.31L599.09 103.79L599.60 104.30L600.10 103.88L600.60 102.68L601.10 100.80L601.60 98.43L602.10 95.80L602.60 93.17L603.10 90.80L603.60 88.92L604.10 87.72L604.60 87.30L605.11 87.81L605.62 89.29L606.13 91.55L606.64 94.32L607.16 97.28L607.67 100.05L608.18 102.31L608.69 103.79L609.20 104.30L609.70 103.88L610.20 102.68L610.70 100.80L611.20 98.43L611.70 95.80L612.20 93.17L612.70 90.80L613.20 88.92L613.70 87.72L614.20 87.30L614.70 87.81L615.20 89.29L615.70 91.55L616.20 94.32L616.70 97.28L617.20 100.05L617.70 102.31L618.20 103.79L618.70 104.30L619.20 103.88L619.70 102.68L620.20 100.80L620.70 98.43L621.20 95.80L621.70 93.17L622.20 90.80L622.70 88.92L623.20 87.72L623.70 87.30L624.21 87.81L624.72 89.29L625.23 91.55L625.74 94.32L626.26 97.28L626.77 100.05L627.28 102.31L627.79 103.79L628.30 104.30L628.83 103.79L629.37 102.31L629.90 100.05L630.43 97.28L630.97 94.32L631.50 91.55L632.03 89.29L632.57 87.81L633.10 87.30L633.62 87.81L634.14 89.29L634.67 91.55L635.19 94.32L635.71 97.28L636.23 100.05L636.76 102.31L637.28 103.79L637.80 104.30L638.34 103.79L638.89 102.31L639.43 100.05L639.98 97.28L640.52 94.32L641.07 91.55L641.61 89.29L642.16 87.81L642.70 87.30L643.21 87.81L643.71 89.29L644.22 91.55L644.72 94.32L645.23 97.28L645.73 100.05L646.24 102.31L646.74 103.79L647.25 104.30L647.79 103.79L648.33 102.31L648.87 100.05L649.41 97.28L649.94 94.32L650.48 91.55L651.02 89.29L651.56 87.81L652.10 87.30L652.61 87.81L653.12 89.29L653.63 91.55L654.14 94.32L654.66 97.28L655.17 100.05L655.68 102.31L656.19 103.79L656.70 104.30L657.22 103.79L657.74 102.31L658.27 100.05L658.79 97.28L659.31 94.32L659.83 91.55L660.36 89.29L660.88 87.81L661.40 87.30L661.91 87.81L662.42 89.29L662.93 91.55L663.44 94.32L663.96 97.28L664.47 100.05L664.98 102.31L665.49 103.79L666.00 104.30L666.50 103.88L667.00 102.68L667.50 100.80L668.00 98.43L668.50 95.80L669.00 93.17L669.50 90.80L670.00 88.92L670.50 87.72L671.00 87.30L671.51 87.81L672.02 89.29L672.53 91.55L673.04 94.32L673.56 97.28L674.07 100.05L674.58 102.31L675.09 103.79L675.60 104.30L676.10 103.88L676.60 102.68L677.10 100.80L677.60 98.43L678.10 95.80L678.60 93.17L679.10 90.80L679.60 88.92L680.10 87.72L680.60 87.30L681.11 87.81L681.62 89.29L682.13 91.55L682.64 94.32L683.16 97.28L683.67 100.05L684.18 102.31L684.69 103.79L685.20 104.30L685.70 103.86L686.20 102.58L686.70 100.58L687.20 98.06L687.70 95.28L688.20 92.49L688.70 89.97L689.20 87.97L689.70 86.69L690.20 86.25L690.71 86.31L691.21 86.48L691.72 86.76L692.23 87.16L692.74 87.65L693.24 88.24L693.75 88.92L694.26 89.68L694.77 90.51L695.27 91.40L695.78 92.33L696.29 93.29L696.80 94.28L697.30 95.27L697.81 96.26L698.32 97.22L698.83 98.15L699.33 99.04L699.84 99.87L700.35 100.63L700.86 101.31L701.36 101.90L701.87 102.39L702.38 102.79L702.89 103.07L703.39 103.24L703.90 103.30L704.41 103.25L704.91 103.09L705.42 102.82L705.93 102.46L706.44 101.99L706.94 101.44L707.45 100.80L707.96 100.09L708.46 99.31L708.97 98.47L709.48 97.59L709.99 96.67L710.49 95.73L711.00 94.78L711.51 93.82L712.01 92.88L712.52 91.96L713.03 91.08L713.54 90.24L714.04 89.46L714.55 88.75L715.06 88.11L715.56 87.56L716.07 87.09L716.58 86.73L717.09 86.46L717.59 86.30L718.10 86.25L718.61 86.31L719.12 86.47L719.63 86.74L720.14 87.12L720.65 87.59L721.16 88.16L721.67 88.81L722.19 89.54L722.70 90.34L723.21 91.20L723.72 92.11L724.23 93.05L724.74 94.02L725.25 95.00L725.76 95.98L726.27 96.95L726.78 97.89L727.29 98.80L727.80 99.66L728.31 100.46L728.83 101.19L729.34 101.84L729.85 102.41L730.36 102.88L730.87 103.26L731.38 103.53L731.89 103.69L732.40 103.75L732.91 103.67L733.42 103.45L733.93 103.08L734.43 102.57L734.94 101.93L735.45 101.17L735.96 100.31L736.47 99.36L736.98 98.35L737.49 97.28L738.00 96.18L738.50 95.07L739.01 93.97L739.52 92.90L740.03 91.89L740.54 90.94L741.05 90.08L741.56 89.32L742.07 88.68L742.57 88.17L743.08 87.80L743.59 87.58L744.10 87.50L744.62 88.09L745.14 89.76L745.66 92.25L746.17 95.20L746.69 98.15L747.21 100.64L747.73 102.31L748.25 102.90L748.76 102.40L749.26 100.95L749.77 98.74L750.27 96.02L750.78 93.13L751.28 90.41L751.79 88.20L752.29 86.75L752.80 86.25L753.31 86.79L753.82 88.36L754.33 90.76L754.84 93.71L755.36 96.84L755.87 99.79L756.38 102.19L756.89 103.76L757.40 104.30L757.90 103.88L758.40 102.65L758.90 100.73L759.40 98.32L759.90 95.65L760.40 92.98L760.90 90.57L761.40 88.65L761.90 87.42L762.40 87.00L762.91 87.52L763.42 89.02L763.93 91.33L764.44 94.15L764.96 97.15L765.47 99.97L765.98 102.28L766.49 103.78L767.00 104.30L767.50 103.88L768.00 102.65L768.50 100.73L769.00 98.32L769.50 95.65L770.00 92.98L770.50 90.57L771.00 88.65L771.50 87.42L772.00 87.00L772.51 87.52L773.02 89.02L773.53 91.33L774.04 94.15L774.56 97.15L775.07 99.97L775.58 102.28L776.09 103.78L776.60 104.30L777.10 103.88L777.60 102.65L778.10 100.73L778.60 98.32L779.10 95.65L779.60 92.98L780.10 90.57L780.60 88.65L781.10 87.42L781.60 87.00L782.15 87.66L782.70 89.53L783.25 92.34L783.80 95.65L784.35 98.96L784.90 101.77L785.45 103.64L786.00 104.30L786.53 103.78L787.06 102.28L787.58 99.97L788.11 97.15L788.64 94.15L789.17 91.33L789.69 89.02L790.22 87.52L790.75 87.00L791.26 87.52L791.76 89.02L792.27 91.33L792.77 94.15L793.28 97.15L793.78 99.97L794.29 102.28L794.79 103.78L795.30 104.30L795.87 103.46L796.43 101.15L797.00 98.00L797.57 94.85L798.13 92.54L798.70 91.70L799.23 91.82L799.75 92.17L800.28 92.73L800.81 93.49L801.33 94.40L801.86 95.43L802.39 96.54L802.91 97.66L803.44 98.77L803.97 99.80L804.49 100.71L805.02 101.47L805.55 102.03L806.07 102.38L806.60 102.50L807.11 102.45L807.61 102.29L808.12 102.03L808.63 101.67L809.14 101.21L809.64 100.67L810.15 100.04L810.66 99.34L811.16 98.57L811.67 97.74L812.18 96.87L812.69 95.97L813.19 95.04L813.70 94.10L814.21 93.16L814.71 92.23L815.22 91.33L815.73 90.46L816.24 89.63L816.74 88.86L817.25 88.16L817.76 87.53L818.26 86.99L818.77 86.53L819.28 86.17L819.79 85.91L820.29 85.75L820.80 85.70L821.30 85.76L821.80 85.92L822.30 86.19L822.80 86.57L823.30 87.05L823.80 87.62L824.30 88.28L824.80 89.01L825.30 89.82L825.80 90.68L826.30 91.59L826.80 92.54L827.30 93.51L827.80 94.50L828.30 95.49L828.80 96.46L829.30 97.41L829.80 98.32L830.30 99.18L830.80 99.99L831.30 100.72L831.80 101.38L832.30 101.95L832.80 102.43L833.30 102.81L833.80 103.08L834.30 103.24L834.80 103.30L835.31 103.24L835.83 103.08L836.34 102.81L836.86 102.43L837.37 101.95L837.89 101.38L838.40 100.72L838.91 99.99L839.43 99.18L839.94 98.32L840.46 97.41L840.97 96.46L841.49 95.49L842.00 94.50L842.51 93.51L843.03 92.54L843.54 91.59L844.06 90.68L844.57 89.82L845.09 89.01L845.60 88.28L846.11 87.62L846.63 87.05L847.14 86.57L847.66 86.19L848.17 85.92L848.69 85.76L849.20 85.70L849.70 85.76L850.21 85.92L850.71 86.19L851.21 86.57L851.72 87.05L852.22 87.62L852.73 88.28L853.23 89.01L853.73 89.82L854.24 90.68L854.74 91.59L855.24 92.54L855.75 93.51L856.25 94.50L856.75 95.49L857.26 96.46L857.76 97.41L858.26 98.32L858.77 99.18L859.27 99.99L859.77 100.72L860.28 101.38L860.78 101.95L861.29 102.43L861.79 102.81L862.29 103.08L862.80 103.24L863.30 103.30L863.81 103.25L864.31 103.09L864.82 102.82L865.33 102.46L865.84 102.00L866.34 101.45L866.85 100.81L867.36 100.10L867.86 99.32L868.37 98.49L868.88 97.61L869.39 96.69L869.89 95.75L870.40 94.80L870.91 93.85L871.41 92.91L871.92 91.99L872.43 91.11L872.94 90.28L873.44 89.50L873.95 88.79L874.46 88.15L874.96 87.60L875.47 87.14L875.98 86.78L876.49 86.51L876.99 86.35L877.50 86.30L878.00 86.49L878.50 87.07L879.00 87.99L879.50 89.23L880.00 90.72L880.50 92.42L881.00 94.22L881.50 96.08L882.00 97.88L882.50 99.58L883.00 101.07L883.50 102.31L884.00 103.23L884.50 103.81L885.00 104.00L885.50 103.57L886.00 102.33L886.50 100.39L887.00 97.95L887.50 95.25L888.00 92.55L888.50 90.11L889.00 88.17L889.50 86.93L890.00 86.50L890.51 87.03L891.02 88.55L891.53 90.88L892.04 93.73L892.56 96.77L893.07 99.62L893.58 101.95L894.09 103.47L894.60 104.00L895.12 103.48L895.64 101.98L896.17 99.67L896.69 96.85L897.21 93.85L897.73 91.03L898.26 88.72L898.78 87.22L899.30 86.70L899.80 87.11L900.30 88.29L900.80 90.12L901.30 92.44L901.80 95.00L902.30 97.56L902.80 99.88L903.30 101.71L903.80 102.89L904.30 103.30L904.89 102.22L905.48 99.40L906.07 95.90L906.66 93.08L907.25 92.00L907.75 92.11L908.25 92.45L908.75 93.00L909.25 93.74L909.75 94.62L910.25 95.63L910.75 96.70L911.25 97.80L911.75 98.87L912.25 99.88L912.75 100.76L913.25 101.50L913.75 102.05L914.25 102.39L914.75 102.50L915.26 102.44L915.77 102.27L916.28 101.99L916.79 101.61L917.30 101.12L917.81 100.53L918.31 99.86L918.82 99.12L919.33 98.30L919.84 97.43L920.35 96.51L920.86 95.56L921.37 94.59L921.88 93.61L922.39 92.64L922.90 91.69L923.41 90.77L923.92 89.90L924.43 89.08L924.94 88.34L925.44 87.67L925.95 87.08L926.46 86.59L926.97 86.21L927.48 85.93L927.99 85.76L928.50 85.70L929.01 85.76L929.51 85.92L930.02 86.19L930.53 86.57L931.04 87.05L931.54 87.62L932.05 88.28L932.56 89.01L933.06 89.82L933.57 90.68L934.08 91.59L934.59 92.54L935.09 93.51L935.60 94.50L936.11 95.49L936.61 96.46L937.12 97.41L937.63 98.32L938.14 99.18L938.64 99.99L939.15 100.72L939.66 101.38L940.16 101.95L940.67 102.43L941.18 102.81L941.69 103.08L942.19 103.24L942.70 103.30L943.21 103.24L943.71 103.07L944.22 102.78L944.73 102.38L945.24 101.88L945.74 101.28L946.25 100.59L946.76 99.82L947.27 98.97L947.77 98.08L948.28 97.13L948.79 96.15L949.30 95.15L949.80 94.15L950.31 93.15L950.82 92.17L951.33 91.22L951.83 90.33L952.34 89.48L952.85 88.71L953.36 88.02L953.86 87.42L954.37 86.92L954.88 86.52L955.39 86.23L955.89 86.06L956.40 86.00L956.91 86.10L957.42 86.37L957.93 86.80L958.44 87.32L958.96 87.88L959.47 88.40L959.98 88.83L960.49 89.10L961.00 89.20L961.62 88.35L962.25 87.50L962.76 88.00L963.26 89.43L963.77 91.62L964.27 94.32L964.78 97.18L965.28 99.88L965.79 102.07L966.29 103.50L966.80 104.00L967.30 103.58L967.80 102.38L968.30 100.50L968.80 98.13L969.30 95.50L969.80 92.87L970.30 90.50L970.80 88.62L971.30 87.42L971.80 87.00L972.31 87.51L972.82 88.99L973.33 91.25L973.84 94.02L974.36 96.98L974.87 99.75L975.38 102.01L975.89 103.49L976.40 104.00L976.90 103.58L977.40 102.38L977.90 100.50L978.40 98.13L978.90 95.50L979.40 92.87L979.90 90.50L980.40 88.62L980.90 87.42L981.40 87.00L981.95 87.63L982.50 89.42L983.05 92.09L983.60 95.25L984.15 98.41L984.70 101.08L985.25 102.87L985.80 103.50L986.38 102.37L986.95 99.65L987.52 96.93L988.10 95.80L988.61 95.91L989.12 96.25L989.62 96.78L990.13 97.47L990.64 98.28L991.15 99.15L991.66 100.02L992.17 100.83L992.68 101.52L993.18 102.05L993.69 102.39L994.20 102.50L994.70 102.44L995.21 102.27L995.71 101.99L996.21 101.61L996.72 101.12L997.22 100.53L997.73 99.86L998.23 99.12L998.73 98.30L999.24 97.43L999.74 96.51L1000.24 95.56L1000.75 94.59L1001.25 93.61L1001.76 92.64L1002.26 91.69L1002.76 90.77L1003.27 89.90L1003.77 89.08L1004.27 88.34L1004.78 87.67L1005.28 87.08L1005.79 86.59L1006.29 86.21L1006.79 85.93L1007.30 85.76L1007.80 85.70L1008.30 85.79L1008.80 86.05L1009.30 86.47L1009.80 87.03L1010.30 87.71L1010.80 88.48L1011.30 89.30L1011.80 90.15L1012.30 90.97L1012.80 91.74L1013.30 92.42L1013.80 92.98L1014.30 93.40L1014.80 93.66L1015.30 93.75L1015.82 92.81L1016.35 90.53L1016.88 88.24L1017.40 87.30L1017.91 87.80L1018.42 89.25L1018.93 91.47L1019.44 94.20L1019.96 97.10L1020.47 99.83L1020.98 102.05L1021.49 103.50L1022.00 104.00L1022.50 103.59L1023.00 102.41L1023.50 100.56L1024.00 98.23L1024.50 95.65L1025.00 93.07L1025.50 90.74L1026.00 88.89L1026.50 87.71L1027.00 87.30L1027.51 87.80L1028.02 89.25L1028.53 91.47L1029.04 94.20L1029.56 97.10L1030.07 99.83L1030.58 102.05L1031.09 103.50L1031.60 104.00L1032.10 103.59L1032.60 102.41L1033.10 100.56L1033.60 98.23L1034.10 95.65L1034.60 93.07L1035.10 90.74L1035.60 88.89L1036.10 87.71L1036.60 87.30L1037.11 87.80L1037.62 89.25L1038.13 91.47L1038.64 94.20L1039.16 97.10L1039.67 99.83L1040.18 102.05L1040.69 103.50L1041.20 104.00L1041.73 103.50L1042.27 102.05L1042.80 99.83L1043.33 97.10L1043.87 94.20L1044.40 91.47L1044.93 89.25L1045.47 87.80L1046.00 87.30L1046.53 87.80L1047.06 89.25L1047.58 91.47L1048.11 94.20L1048.64 97.10L1049.17 99.83L1049.69 102.05L1050.22 103.50L1050.75 104.00L1051.26 103.50L1051.76 102.05L1052.27 99.83L1052.77 97.10L1053.28 94.20L1053.78 91.47L1054.29 89.25L1054.79 87.80L1055.30 87.30L1055.84 87.80L1056.39 89.25L1056.93 91.47L1057.48 94.20L1058.02 97.10L1058.57 99.83L1059.11 102.05L1059.66 103.50L1060.20 104.00L1060.72 103.50L1061.24 102.05L1061.77 99.83L1062.29 97.10L1062.81 94.20L1063.33 91.47L1063.86 89.25L1064.38 87.80L1064.90 87.30L1065.41 87.80L1065.92 89.25L1066.43 91.47L1066.94 94.20L1067.46 97.10L1067.97 99.83L1068.48 102.05L1068.99 103.50L1069.50 104.00L1070.00 103.59L1070.50 102.41L1071.00 100.56L1071.50 98.23L1072.00 95.65L1072.50 93.07L1073.00 90.74L1073.50 88.89L1074.00 87.71L1074.50 87.30L1075.01 87.80L1075.52 89.25L1076.03 91.47L1076.54 94.20L1077.06 97.10L1077.57 99.83L1078.08 102.05L1078.59 103.50L1079.10 104.00L1079.64 103.48L1080.19 101.98L1080.73 99.67L1081.28 96.85L1081.82 93.85L1082.37 91.03L1082.91 88.72L1083.46 87.22L1084.00 86.70L1084.50 87.21L1085.00 88.69L1085.50 90.96L1086.00 93.74L1086.50 96.71L1087.00 99.49L1087.50 101.76L1088.00 103.24L1088.50 103.75L1089.01 103.33L1089.52 102.12L1090.03 100.24L1090.54 97.86L1091.05 95.23L1091.56 92.59L1092.07 90.21L1092.58 88.33L1093.09 87.12L1093.60 86.70L1094.10 87.32L1094.60 89.05L1095.10 91.56L1095.60 94.34L1096.10 96.85L1096.60 98.58L1097.10 99.20L1097.62 99.09L1098.14 98.75L1098.66 98.20L1099.17 97.46L1099.69 96.56L1100.21 95.53L1100.73 94.41L1101.25 93.25L1101.77 92.09L1102.29 90.97L1102.81 89.94L1103.33 89.04L1103.84 88.30L1104.36 87.75L1104.88 87.41L1105.40 87.30L1105.91 87.35L1106.43 87.51L1106.94 87.77L1107.46 88.14L1107.97 88.60L1108.49 89.14L1109.00 89.77L1109.51 90.48L1110.03 91.25L1110.54 92.08L1111.06 92.96L1111.57 93.87L1112.09 94.80L1112.60 95.75L1113.11 96.70L1113.63 97.63L1114.14 98.54L1114.66 99.42L1115.17 100.25L1115.69 101.02L1116.20 101.73L1116.71 102.36L1117.23 102.90L1117.74 103.36L1118.26 103.73L1118.77 103.99L1119.29 104.15L1119.80 104.20L1120.32 104.14L1120.83 103.97L1121.35 103.69L1121.87 103.30L1122.38 102.81L1122.90 102.22L1123.42 101.55L1123.93 100.80L1124.45 99.98L1124.97 99.10L1125.48 98.17L1126.00 97.22L1126.52 96.24L1127.03 95.26L1127.55 94.28L1128.07 93.33L1128.58 92.40L1129.10 91.53L1129.62 90.70L1130.13 89.95L1130.65 89.28L1131.17 88.69L1131.68 88.20L1132.20 87.81L1132.72 87.53L1133.23 87.36L1133.75 87.30L1134.26 87.35L1134.76 87.51L1135.27 87.77L1135.77 88.14L1136.28 88.60L1136.78 89.14L1137.29 89.77L1137.79 90.48L1138.30 91.25L1138.80 92.08L1139.31 92.96L1139.81 93.87L1140.32 94.80L1140.83 95.75L1141.33 96.70L1141.84 97.63L1142.34 98.54L1142.85 99.42L1143.35 100.25L1143.86 101.02L1144.36 101.73L1144.87 102.36L1145.37 102.90L1145.88 103.36L1146.38 103.73L1146.89 103.99L1147.39 104.15L1147.90 104.20L1148.41 104.15L1148.91 103.99L1149.42 103.73L1149.93 103.36L1150.44 102.90L1150.94 102.36L1151.45 101.73L1151.96 101.02L1152.46 100.25L1152.97 99.42L1153.48 98.54L1153.99 97.63L1154.49 96.70L1155.00 95.75L1155.51 94.80L1156.01 93.87L1156.52 92.96L1157.03 92.08L1157.54 91.25L1158.04 90.48L1158.55 89.77L1159.06 89.14L1159.56 88.60L1160.07 88.14L1160.58 87.77L1161.09 87.51L1161.59 87.35L1162.10 87.30L1162.61 87.35L1163.11 87.51L1163.62 87.77L1164.12 88.14L1164.63 88.60L1165.13 89.14L1165.64 89.77L1166.14 90.48L1166.65 91.25L1167.15 92.08L1167.66 92.96L1168.16 93.87L1168.67 94.80L1169.17 95.75L1169.68 96.70L1170.19 97.63L1170.69 98.54L1171.20 99.42L1171.70 100.25L1172.21 101.02L1172.71 101.73L1173.22 102.36L1173.72 102.90L1174.23 103.36L1174.73 103.73L1175.24 103.99L1175.74 104.15L1176.25 104.20L1176.75 104.09L1177.26 103.75L1177.76 103.22L1178.27 102.53L1178.77 101.72L1179.28 100.85L1179.78 99.98L1180.28 99.17L1180.79 98.48L1181.29 97.95L1181.80 97.61L1182.30 97.50" fill="none" stroke="#1c1c1c" stroke-width="1.0" stroke-linejoin="round"/>
<rect x="363" y="152.5" width="820" height="8.4" fill="#e6e4e0"/>
<line x1="363" y1="152.5" x2="1183" y2="152.5" stroke="#c9c4be" stroke-width="1"/>
<rect x="363" y="153" width="8.4" height="7.9" fill="#fdfcfb"/>
<line x1="371.5" y1="153" x2="371.5" y2="161" stroke="#c9c4be" stroke-width="1"/>
<path d="M365.2 156.6 L368.2 154.4 L368.2 158.8 Z" fill="#333"/>
<rect x="1174.6" y="153" width="8.4" height="7.9" fill="#fdfcfb"/>
<line x1="1174.5" y1="153" x2="1174.5" y2="161" stroke="#c9c4be" stroke-width="1"/>
<path d="M1180.6 156.6 L1177.6 154.4 L1177.6 158.8 Z" fill="#333"/>
<rect x="1079.6" y="153" width="17.90000000000009" height="7.9" fill="url(#hgrad)"/>
<line x1="1080.1" y1="153" x2="1080.1" y2="161" stroke="#c3beb8" stroke-width="1"/>
<line x1="1097.0" y1="153" x2="1097.0" y2="161" stroke="#c3beb8" stroke-width="1"/>
<text x="1187.42" y="47.35" font-family='"Liberation Sans", sans-serif' font-size="8.8" fill="#1e1e1e" stroke="#1e1e1e" stroke-width="0.3" textLength="30.94" lengthAdjust="spacingAndGlyphs">Y-Scale</text>
<rect x="1189.3" y="53.5" width="3.4" height="104" fill="#d9d5d0" stroke="#bdb8b2" stroke-width="0.8" rx="1.7"/>
<line x1="1197" y1="57.3" x2="1199.4" y2="57.3" stroke="#9a9692" stroke-width="0.75"/>
<line x1="1197" y1="67.2" x2="1199.4" y2="67.2" stroke="#9a9692" stroke-width="0.75"/>
<line x1="1197" y1="77.1" x2="1199.4" y2="77.1" stroke="#9a9692" stroke-width="0.75"/>
<line x1="1197" y1="87.0" x2="1199.4" y2="87.0" stroke="#9a9692" stroke-width="0.75"/>
<line x1="1197" y1="96.9" x2="1199.4" y2="96.9" stroke="#9a9692" stroke-width="0.75"/>
<line x1="1197" y1="106.8" x2="1199.4" y2="106.8" stroke="#9a9692" stroke-width="0.75"/>
<line x1="1197" y1="116.7" x2="1199.4" y2="116.7" stroke="#9a9692" stroke-width="0.75"/>
<line x1="1197" y1="126.6" x2="1199.4" y2="126.6" stroke="#9a9692" stroke-width="0.75"/>
<line x1="1197" y1="136.5" x2="1199.4" y2="136.5" stroke="#9a9692" stroke-width="0.75"/>
<line x1="1197" y1="146.4" x2="1199.4" y2="146.4" stroke="#9a9692" stroke-width="0.75"/>
<line x1="1197" y1="156.3" x2="1199.4" y2="156.3" stroke="#9a9692" stroke-width="0.75"/>
<rect x="1187.2" y="152.7" width="7" height="7.4" fill="#fbfaf9" stroke="#b9b4ae" stroke-width="0.8" rx="1.2"/>
<rect x="363.5" y="165.5" width="8.3" height="14.5" fill="url(#btn)" stroke="#b9b4ae" stroke-width="1" rx="1.5"/>
<path d="M365.4 172.8 H369.8 M367.6 170.6 V175" stroke="#111" stroke-width="1"/>
<text x="1101.85" y="176.15" font-family='"Liberation Sans", sans-serif' font-size="8.8" fill="#1e1e1e" stroke="#1e1e1e" stroke-width="0.3" textLength="36.04" lengthAdjust="spacingAndGlyphs">X-Zoom:</text>
<rect x="1142.2" y="165.9" width="75.6" height="14.0" fill="#fff" stroke="#b9b4ae" stroke-width="1" rx="2"/>
<line x1="1208.8" y1="166.4" x2="1208.8" y2="179.4" stroke="#cfcac4" stroke-width="1"/>
<path d="M1210.30 171.20 L1212.90 168.40 L1215.50 171.20 Z" fill="#3a3a3a"/>
<path d="M1210.30 174.20 L1212.90 177.00 L1215.50 174.20 Z" fill="#3a3a3a"/>
<text x="1145.29" y="176.10" font-family='"Liberation Sans", sans-serif' font-size="8.8" fill="#1e1e1e" stroke="#1e1e1e" stroke-width="0.3" textLength="40.29" lengthAdjust="spacingAndGlyphs">424195%</text>
<text x="376.18" y="176.15" font-family='"Liberation Sans", sans-serif' font-size="8.8" fill="#1e1e1e" stroke="#1e1e1e" stroke-width="0.3" textLength="21.50" lengthAdjust="spacingAndGlyphs">2002</text>
<text x="402.24" y="176.15" font-family='"Liberation Sans", sans-serif' font-size="8.8" fill="#1e1e1e" stroke="#1e1e1e" stroke-width="0.3" textLength="73.48" lengthAdjust="spacingAndGlyphs">samples selected</text>
<text x="478.73" y="176.15" font-family='"Liberation Sans", sans-serif' font-size="8.8" fill="#1e1e1e" stroke="#1e1e1e" stroke-width="0.3" textLength="2.85" lengthAdjust="spacingAndGlyphs">|</text>
<text x="485.58" y="176.15" font-family='"Liberation Sans", sans-serif' font-size="8.8" fill="#1e1e1e" stroke="#1e1e1e" stroke-width="0.3" textLength="34.13" lengthAdjust="spacingAndGlyphs">2,00 ms</text>
<rect x="363.5" y="183.5" width="854" height="54" fill="#fff" stroke="#b9b4ae" stroke-width="1"/>
<rect x="1208.6" y="184" width="8.4" height="53" fill="#fdfcfb"/>
<line x1="1208.6" y1="184" x2="1208.6" y2="237.5" stroke="#cfcac4" stroke-width="1"/>
<rect x="1209.1" y="192.6" width="7.9" height="17.700000000000017" fill="#dcd9d5"/>
<line x1="1209.1" y1="192.6" x2="1217" y2="192.6" stroke="#d2cdc7" stroke-width="0.8"/>
<line x1="1209.1" y1="210.3" x2="1217" y2="210.3" stroke="#d2cdc7" stroke-width="0.8"/>
<rect x="1209.1" y="210.3" width="7.9" height="18.0" fill="#fdfcfb"/>
<line x1="1209.1" y1="210.3" x2="1217" y2="210.3" stroke="#d2cdc7" stroke-width="0.8"/>
<line x1="1209.1" y1="228.3" x2="1217" y2="228.3" stroke="#d2cdc7" stroke-width="0.8"/>
<path d="M1210.6 190.9 L1215.4 190.9 L1213 188.2 Z" fill="#333"/>
<path d="M1210.6 231.2 L1215.4 231.2 L1213 233.9 Z" fill="#333"/>
<clipPath id="ta1"><rect x="364" y="184" width="844.5" height="53"/></clipPath><g clip-path="url(#ta1)">
<rect x="405.8" y="198.0" width="25" height="9.8" fill="#2a82ca"/>
<text x="365.90" y="186.90" font-family='"Liberation Mono", monospace' font-size="9.1" fill="#151515" stroke="#151515" stroke-width="0.05" textLength="156.09" lengthAdjust="spacingAndGlyphs" xml:space="preserve">aaaaaaaa67686768fc99ff1598fbf [</text>
<text x="521.99" y="186.90" font-family='"Liberation Mono", monospace' font-size="9.1" font-weight="bold" fill="#151515" stroke="#151515" stroke-width="0.05" textLength="25.18" lengthAdjust="spacingAndGlyphs" xml:space="preserve">Pause</text>
<text x="547.16" y="186.90" font-family='"Liberation Mono", monospace' font-size="9.1" fill="#151515" stroke="#151515" stroke-width="0.05" textLength="80.56" lengthAdjust="spacingAndGlyphs" xml:space="preserve">: 33291 samples]</text>
<text x="365.90" y="196.40" font-family='"Liberation Mono", monospace' font-size="9.1" fill="#151515" stroke="#151515" stroke-width="0.05" textLength="317.20" lengthAdjust="spacingAndGlyphs" xml:space="preserve">aaaaaaaa67686768ecc16de20f0c2844d97ad239735619b455caf2955bf9f [</text>
<text x="683.11" y="196.40" font-family='"Liberation Mono", monospace' font-size="9.1" font-weight="bold" fill="#151515" stroke="#151515" stroke-width="0.05" textLength="25.18" lengthAdjust="spacingAndGlyphs" xml:space="preserve">Pause</text>
<text x="708.28" y="196.40" font-family='"Liberation Mono", monospace' font-size="9.1" fill="#151515" stroke="#151515" stroke-width="0.05" textLength="80.56" lengthAdjust="spacingAndGlyphs" xml:space="preserve">: 13176 samples]</text>
<text x="365.90" y="205.60" font-family='"Liberation Mono", monospace' font-size="9.1" fill="#151515" stroke="#151515" stroke-width="0.05" textLength="156.09" lengthAdjust="spacingAndGlyphs" xml:space="preserve">aaaaaaaa67686768fcfa7da910d20 [</text>
<text x="521.99" y="205.60" font-family='"Liberation Mono", monospace' font-size="9.1" font-weight="bold" fill="#151515" stroke="#151515" stroke-width="0.05" textLength="25.18" lengthAdjust="spacingAndGlyphs" xml:space="preserve">Pause</text>
<text x="547.16" y="205.60" font-family='"Liberation Mono", monospace' font-size="9.1" fill="#151515" stroke="#151515" stroke-width="0.05" textLength="85.59" lengthAdjust="spacingAndGlyphs" xml:space="preserve">: 110039 samples]</text>
<text x="365.90" y="215.20" font-family='"Liberation Mono", monospace' font-size="9.1" fill="#151515" stroke="#151515" stroke-width="0.05" textLength="327.28" lengthAdjust="spacingAndGlyphs" xml:space="preserve">aaaaaaaa67686768ebc16d818db64bc6637ade5b6104c4baaa47132c6c3ba38 [</text>
<text x="693.17" y="215.20" font-family='"Liberation Mono", monospace' font-size="9.1" font-weight="bold" fill="#151515" stroke="#151515" stroke-width="0.05" textLength="25.18" lengthAdjust="spacingAndGlyphs" xml:space="preserve">Pause</text>
<text x="718.35" y="215.20" font-family='"Liberation Mono", monospace' font-size="9.1" fill="#151515" stroke="#151515" stroke-width="0.05" textLength="80.56" lengthAdjust="spacingAndGlyphs" xml:space="preserve">: 13602 samples]</text>
<text x="365.90" y="224.90" font-family='"Liberation Mono", monospace' font-size="9.1" fill="#151515" stroke="#151515" stroke-width="0.05" textLength="357.49" lengthAdjust="spacingAndGlyphs" xml:space="preserve">aaaaaaaa67686768e8816de20f0c2844d97ad2397408e1f8f88d77c5466c5c8ca37e7 [</text>
<text x="723.38" y="224.90" font-family='"Liberation Mono", monospace' font-size="9.1" font-weight="bold" fill="#151515" stroke="#151515" stroke-width="0.05" textLength="25.18" lengthAdjust="spacingAndGlyphs" xml:space="preserve">Pause</text>
<text x="748.56" y="224.90" font-family='"Liberation Mono", monospace' font-size="9.1" fill="#151515" stroke="#151515" stroke-width="0.05" textLength="80.56" lengthAdjust="spacingAndGlyphs" xml:space="preserve">: 12133 samples]</text>
<text x="365.90" y="234.20" font-family='"Liberation Mono", monospace' font-size="9.1" fill="#151515" stroke="#151515" stroke-width="0.05" textLength="156.09" lengthAdjust="spacingAndGlyphs" xml:space="preserve">aaaaaaaa67686768fcfa7da910d20 [</text>
<text x="521.99" y="234.20" font-family='"Liberation Mono", monospace' font-size="9.1" font-weight="bold" fill="#151515" stroke="#151515" stroke-width="0.05" textLength="25.18" lengthAdjust="spacingAndGlyphs" xml:space="preserve">Pause</text>
<text x="547.16" y="234.20" font-family='"Liberation Mono", monospace' font-size="9.1" fill="#151515" stroke="#151515" stroke-width="0.05" textLength="90.63" lengthAdjust="spacingAndGlyphs" xml:space="preserve">: 1049346 samples]</text>
<clipPath id="sel1"><rect x="405.8" y="197.9" width="25" height="10"/></clipPath>
<g clip-path="url(#sel1)"><text x="406.18" y="205.6" font-family='"Liberation Mono", monospace' font-size="9.1" fill="#fff" stroke="#fff" stroke-width="0.4" textLength="25.18" lengthAdjust="spacingAndGlyphs">67686</text></g>
</g>
<line x1="363" y1="308.1" x2="1183" y2="308.1" stroke="#000" stroke-width="1.7"/>
<line x1="363" y1="309.9" x2="1183" y2="309.9" stroke="#f47a7a" stroke-width="1.8"/>
<path d="M404.50 257.80 L405.60 256.60 L406.60 257.20 L407.40 255.60 L408.60 256.20 L409.60 254.60 L410.60 255.40 L411.60 253.60 L412.70 254.20 L412.70 362.60 L411.50 361.80 L410.40 362.20 L409.20 361.00 L408.00 361.60 L406.80 360.60 L405.60 360.90 L404.50 359.90 Z" fill="#000"/>
<path d="M415.50 268.50 L416.80 267.60 L418.90 268.60 L418.90 348.60 L417.20 349.00 L415.50 348.30 Z" fill="#000"/>
<path d="M1024.75 283.20 Q1028.92 281.60 1033.10 283.20 V334.50 Q1028.92 335.60 1024.75 334.50 Z" fill="#ffff00"/>
<path d="M1055.20 282.30 Q1056.50 280.70 1057.80 282.30 V334.50 Q1056.50 335.60 1055.20 334.50 Z" fill="#000"/>
<path d="M1060.20 282.30 Q1063.00 280.70 1065.80 282.30 V334.50 Q1063.00 335.60 1060.20 334.50 Z" fill="#000"/>
<path d="M1081.80 282.30 Q1083.00 280.70 1084.20 282.30 V334.50 Q1083.00 335.60 1081.80 334.50 Z" fill="#000"/>
<path d="M1119.20 282.30 Q1121.90 280.70 1124.60 282.30 V334.50 Q1121.90 335.60 1119.20 334.50 Z" fill="#000"/>
<path d="M1138.20 282.30 Q1139.60 280.70 1141.00 282.30 V334.50 Q1139.60 335.60 1138.20 334.50 Z" fill="#000"/>
<path d="M1033.90 259.50 L1035.35 257.00 L1036.80 259.50 L1036.80 358.80 L1035.35 361.30 L1033.90 358.80 Z" fill="#000"/>
<path d="M1049.30 255.80 L1051.20 253.30 L1053.10 255.80 L1053.10 360.00 L1051.20 362.50 L1049.30 360.00 Z" fill="#f4a460"/>
<path d="M1052.70 260.00 L1053.60 258.30 L1054.40 260.00 L1054.40 359.50 L1053.60 361.00 L1052.70 359.50 Z" fill="#4a2e1a"/>
<path d="M1067.70 259.50 L1069.15 257.00 L1070.60 259.50 L1070.60 358.80 L1069.15 361.30 L1067.70 358.80 Z" fill="#000"/>
<path d="M1076.00 255.00 L1077.00 253.30 L1078.30 256.50 L1079.40 254.00 L1080.60 256.00 L1080.60 360.50 L1079.40 363.00 L1078.30 360.00 L1077.00 363.30 L1076.00 361.00 Z" fill="#000"/>
<path d="M1125.00 256.70 L1126.60 254.20 L1128.20 256.70 L1128.20 359.60 L1126.60 362.10 L1125.00 359.60 Z" fill="#000"/>
<path d="M1132.10 255.00 L1133.30 253.80 L1134.60 257.00 L1135.90 253.80 L1137.10 255.00 L1137.10 361.50 L1135.90 363.30 L1134.60 360.00 L1133.30 362.50 L1132.10 361.00 Z" fill="#000"/>
<rect x="363" y="366.5" width="820" height="8.4" fill="#e6e4e0"/>
<line x1="363" y1="366.5" x2="1183" y2="366.5" stroke="#c9c4be" stroke-width="1"/>
<rect x="363" y="367" width="8.4" height="7.9" fill="#fdfcfb"/>
<line x1="371.5" y1="367" x2="371.5" y2="375" stroke="#c9c4be" stroke-width="1"/>
<path d="M365.2 370.6 L368.2 368.4 L368.2 372.8 Z" fill="#333"/>
<rect x="1174.6" y="367" width="8.4" height="7.9" fill="#fdfcfb"/>
<line x1="1174.5" y1="367" x2="1174.5" y2="375" stroke="#c9c4be" stroke-width="1"/>
<path d="M1180.6 370.6 L1177.6 368.4 L1177.6 372.8 Z" fill="#333"/>
<rect x="371.5" y="367" width="668.7" height="7.9" fill="url(#hgrad)"/>
<line x1="372.0" y1="367" x2="372.0" y2="375" stroke="#c3beb8" stroke-width="1"/>
<line x1="1039.7" y1="367" x2="1039.7" y2="375" stroke="#c3beb8" stroke-width="1"/>
<text x="1187.42" y="261.35" font-family='"Liberation Sans", sans-serif' font-size="8.8" fill="#1e1e1e" stroke="#1e1e1e" stroke-width="0.3" textLength="30.94" lengthAdjust="spacingAndGlyphs">Y-Scale</text>
<rect x="1189.3" y="267.5" width="3.4" height="104" fill="#d9d5d0" stroke="#bdb8b2" stroke-width="0.8" rx="1.7"/>
<line x1="1197" y1="271.3" x2="1199.4" y2="271.3" stroke="#9a9692" stroke-width="0.75"/>
<line x1="1197" y1="281.2" x2="1199.4" y2="281.2" stroke="#9a9692" stroke-width="0.75"/>
<line x1="1197" y1="291.1" x2="1199.4" y2="291.1" stroke="#9a9692" stroke-width="0.75"/>
<line x1="1197" y1="301.0" x2="1199.4" y2="301.0" stroke="#9a9692" stroke-width="0.75"/>
<line x1="1197" y1="310.9" x2="1199.4" y2="310.9" stroke="#9a9692" stroke-width="0.75"/>
<line x1="1197" y1="320.8" x2="1199.4" y2="320.8" stroke="#9a9692" stroke-width="0.75"/>
<line x1="1197" y1="330.7" x2="1199.4" y2="330.7" stroke="#9a9692" stroke-width="0.75"/>
<line x1="1197" y1="340.6" x2="1199.4" y2="340.6" stroke="#9a9692" stroke-width="0.75"/>
<line x1="1197" y1="350.5" x2="1199.4" y2="350.5" stroke="#9a9692" stroke-width="0.75"/>
<line x1="1197" y1="360.4" x2="1199.4" y2="360.4" stroke="#9a9692" stroke-width="0.75"/>
<line x1="1197" y1="370.3" x2="1199.4" y2="370.3" stroke="#9a9692" stroke-width="0.75"/>
<rect x="1187.2" y="366.7" width="7" height="7.4" fill="#fbfaf9" stroke="#b9b4ae" stroke-width="0.8" rx="1.2"/>
<rect x="363.5" y="379.5" width="8.3" height="14.5" fill="url(#btn)" stroke="#b9b4ae" stroke-width="1" rx="1.5"/>
<path d="M365.4 386.8 H369.8 M367.6 384.6 V389" stroke="#111" stroke-width="1"/>
<text x="1101.85" y="390.15" font-family='"Liberation Sans", sans-serif' font-size="8.8" fill="#1e1e1e" stroke="#1e1e1e" stroke-width="0.3" textLength="36.04" lengthAdjust="spacingAndGlyphs">X-Zoom:</text>
<rect x="1142.2" y="380.0" width="75.6" height="14.0" fill="#fff" stroke="#b9b4ae" stroke-width="1" rx="2"/>
<line x1="1208.8" y1="380.5" x2="1208.8" y2="393.5" stroke="#cfcac4" stroke-width="1"/>
<path d="M1210.30 385.30 L1212.90 382.50 L1215.50 385.30 Z" fill="#3a3a3a"/>
<path d="M1210.30 388.30 L1212.90 391.10 L1215.50 388.30 Z" fill="#b5b5b5"/>
<text x="1144.77" y="390.20" font-family='"Liberation Sans", sans-serif' font-size="8.8" fill="#1e1e1e" stroke="#1e1e1e" stroke-width="0.3" textLength="24.16" lengthAdjust="spacingAndGlyphs">100%</text>
<text x="376.24" y="390.15" font-family='"Liberation Sans", sans-serif' font-size="8.8" fill="#1e1e1e" stroke="#1e1e1e" stroke-width="0.3" textLength="5.38" lengthAdjust="spacingAndGlyphs">0</text>
<text x="385.84" y="390.15" font-family='"Liberation Sans", sans-serif' font-size="8.8" fill="#1e1e1e" stroke="#1e1e1e" stroke-width="0.3" textLength="73.48" lengthAdjust="spacingAndGlyphs">samples selected</text>
<text x="462.53" y="390.15" font-family='"Liberation Sans", sans-serif' font-size="8.8" fill="#1e1e1e" stroke="#1e1e1e" stroke-width="0.3" textLength="2.85" lengthAdjust="spacingAndGlyphs">|</text>
<text x="469.44" y="390.15" font-family='"Liberation Sans", sans-serif' font-size="8.8" fill="#1e1e1e" stroke="#1e1e1e" stroke-width="0.3" textLength="31.26" lengthAdjust="spacingAndGlyphs">0,00 ns</text>
<rect x="363.5" y="397.5" width="854" height="54" fill="#fff" stroke="#b9b4ae" stroke-width="1"/>
<rect x="1208.6" y="398" width="8.4" height="53" fill="#fdfcfb"/>
<line x1="1208.6" y1="398" x2="1208.6" y2="451.5" stroke="#cfcac4" stroke-width="1"/>
<rect x="1209.1" y="406.5" width="7.9" height="18.0" fill="#fdfcfb"/>
<line x1="1209.1" y1="406.5" x2="1217" y2="406.5" stroke="#d2cdc7" stroke-width="0.8"/>
<line x1="1209.1" y1="424.5" x2="1217" y2="424.5" stroke="#d2cdc7" stroke-width="0.8"/>
<rect x="1209.1" y="424.5" width="7.9" height="17.30000000000001" fill="#dcd9d5"/>
<line x1="1209.1" y1="424.5" x2="1217" y2="424.5" stroke="#d2cdc7" stroke-width="0.8"/>
<line x1="1209.1" y1="441.8" x2="1217" y2="441.8" stroke="#d2cdc7" stroke-width="0.8"/>
<path d="M1210.6 404.9 L1215.4 404.9 L1213 402.2 Z" fill="#333"/>
<path d="M1210.6 445.2 L1215.4 445.2 L1213 447.9 Z" fill="#333"/>
<clipPath id="ta2"><rect x="364" y="398" width="844.5" height="53"/></clipPath><g clip-path="url(#ta2)">
<rect x="365.8" y="439.2" width="839.7" height="11.5" fill="#ffff00"/>
<text x="366.00" y="408.30" font-family='"Liberation Mono", monospace' font-size="9.1" fill="#151515" stroke="#151515" stroke-width="0.05" textLength="840.00" lengthAdjust="spacingAndGlyphs" xml:space="preserve">101010101010101010101010101010101001101001111101100110100111110111101001001100000101101101011101011101101100000110001110110101011100101000111101011010011001110010011000</text>
<text x="366.00" y="417.90" font-family='"Liberation Mono", monospace' font-size="9.1" fill="#151515" stroke="#151515" stroke-width="0.05" textLength="840.00" lengthAdjust="spacingAndGlyphs" xml:space="preserve">010100111010000111111110100011100111000001011101001001110101101010000011011011010101000110110100010101100111000110101000101011111100110100110010000001100100110100010001</text>
<text x="366.00" y="427.50" font-family='"Liberation Mono", monospace' font-size="9.1" fill="#151515" stroke="#151515" stroke-width="0.05" textLength="590.00" lengthAdjust="spacingAndGlyphs" xml:space="preserve">00100100111101110110010011111011100110000101111101010001010110110010000011011001000011001000000110111001001101110100 [</text>
<text x="956.00" y="427.50" font-family='"Liberation Mono", monospace' font-size="9.1" font-weight="bold" fill="#151515" stroke="#151515" stroke-width="0.05" textLength="25.00" lengthAdjust="spacingAndGlyphs" xml:space="preserve">Pause</text>
<text x="981.00" y="427.50" font-family='"Liberation Mono", monospace' font-size="9.1" fill="#151515" stroke="#151515" stroke-width="0.05" textLength="80.00" lengthAdjust="spacingAndGlyphs" xml:space="preserve">: 26660 samples]</text>
<text x="366.00" y="437.10" font-family='"Liberation Mono", monospace' font-size="9.1" fill="#151515" stroke="#151515" stroke-width="0.05" textLength="705.00" lengthAdjust="spacingAndGlyphs" xml:space="preserve">1010101010101010101010101010101001100111011010000011001110110100011111001111010010101001011100100100101010110011110111010011011101100110000 [</text>
<text x="1071.00" y="437.10" font-family='"Liberation Mono", monospace' font-size="9.1" font-weight="bold" fill="#151515" stroke="#151515" stroke-width="0.05" textLength="25.00" lengthAdjust="spacingAndGlyphs" xml:space="preserve">Pause</text>
<text x="1096.00" y="437.10" font-family='"Liberation Mono", monospace' font-size="9.1" fill="#151515" stroke="#151515" stroke-width="0.05" textLength="90.00" lengthAdjust="spacingAndGlyphs" xml:space="preserve">: 3892888 samples]</text>
<text x="366.00" y="446.70" font-family='"Liberation Mono", monospace' font-size="9.1" fill="#151515" stroke="#151515" stroke-width="0.05" textLength="840.00" lengthAdjust="spacingAndGlyphs" xml:space="preserve">101010101010101010101010101010101001101001111101100110100111110111001101111100000101101101100001010100010111111011010010111100110011000111011101011010011001111010111001</text>
</g>
<rect x="786.5" y="181.05" width="0.9" height="0.9" fill="#bdb8b2"/>
<rect x="788.45" y="181.05" width="0.9" height="0.9" fill="#bdb8b2"/>
<rect x="790.4" y="181.05" width="0.9" height="0.9" fill="#bdb8b2"/>
<rect x="792.35" y="181.05" width="0.9" height="0.9" fill="#bdb8b2"/>
<rect x="794.3" y="181.05" width="0.9" height="0.9" fill="#bdb8b2"/>
<rect x="796.25" y="181.05" width="0.9" height="0.9" fill="#bdb8b2"/>
<rect x="786.5" y="395.05" width="0.9" height="0.9" fill="#bdb8b2"/>
<rect x="788.45" y="395.05" width="0.9" height="0.9" fill="#bdb8b2"/>
<rect x="790.4" y="395.05" width="0.9" height="0.9" fill="#bdb8b2"/>
<rect x="792.35" y="395.05" width="0.9" height="0.9" fill="#bdb8b2"/>
<rect x="794.3" y="395.05" width="0.9" height="0.9" fill="#bdb8b2"/>
<rect x="796.25" y="395.05" width="0.9" height="0.9" fill="#bdb8b2"/>
<line x1="195" y1="246.9" x2="1224.5" y2="246.9" stroke="#d3cfca" stroke-width="1.0"/>
<rect x="0" y="0" width="10" height="702" fill="#000"/>
<rect x="1238" y="0" width="10" height="702" fill="#000"/></svg></body></html>
